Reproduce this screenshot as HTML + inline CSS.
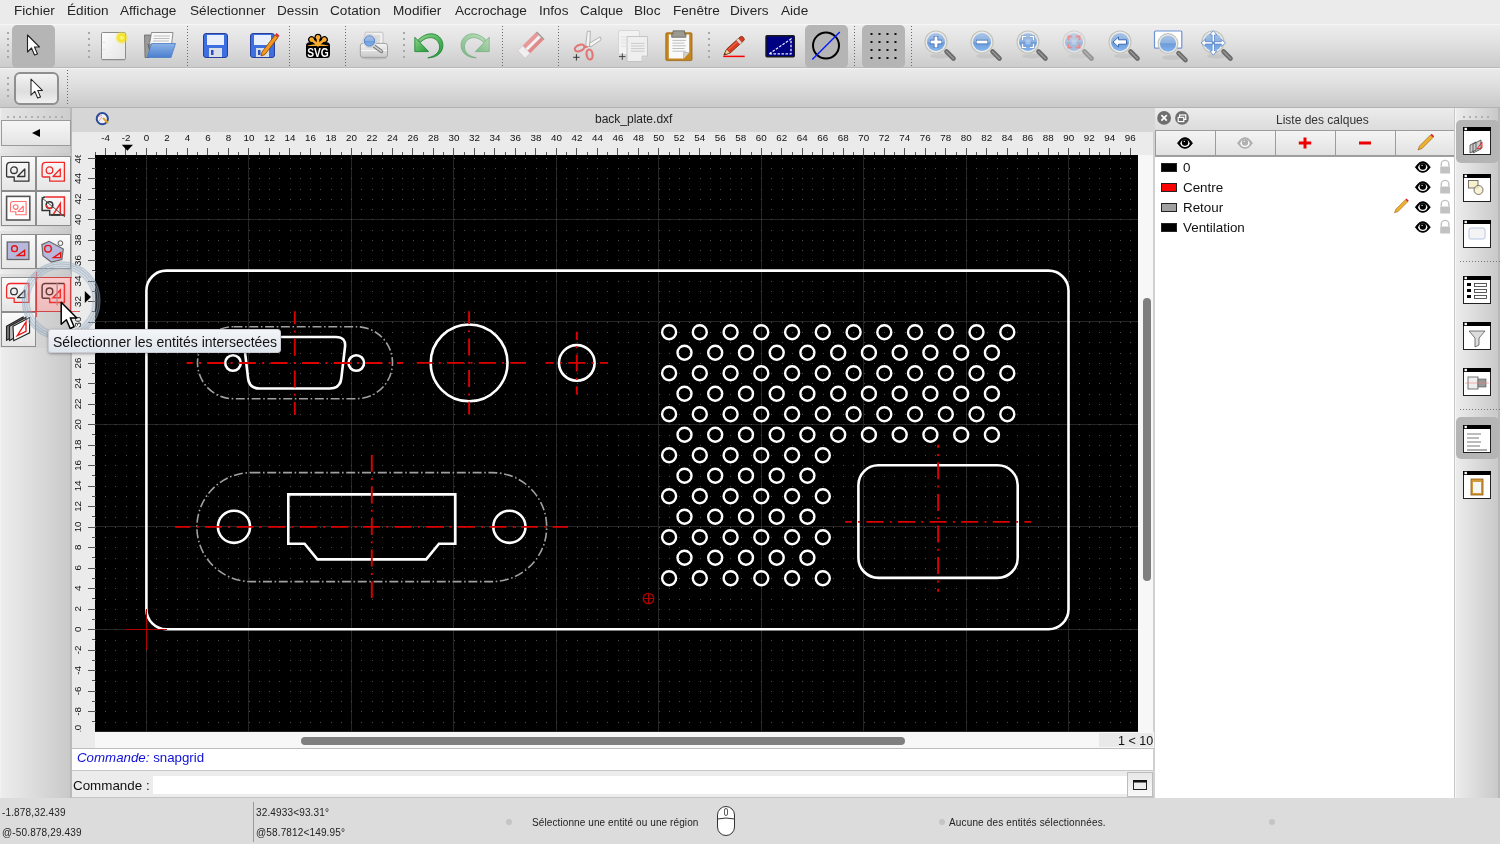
<!DOCTYPE html><html><head><meta charset="utf-8"><style>
*{margin:0;padding:0;box-sizing:border-box}
html,body{width:1500px;height:844px;overflow:hidden;background:#ececec;font-family:"Liberation Sans",sans-serif;color:#262626}
.a{position:absolute}
.t{position:absolute;white-space:nowrap;line-height:1;will-change:transform}
svg{will-change:transform}
</style></head><body><div class="a" style="left:0;top:0;width:1500px;height:24px;background:#ebebeb"></div>
<div class="t" style="left:14.0px;top:3.8px;font-size:13.6px;color:#262626">Fichier</div>
<div class="t" style="left:66.60000000000001px;top:3.8px;font-size:13.6px;color:#262626">Édition</div>
<div class="t" style="left:120.4px;top:3.8px;font-size:13.6px;color:#262626">Affichage</div>
<div class="t" style="left:189.9px;top:3.8px;font-size:13.6px;color:#262626">Sélectionner</div>
<div class="t" style="left:277.29999999999995px;top:3.8px;font-size:13.6px;color:#262626">Dessin</div>
<div class="t" style="left:329.9px;top:3.8px;font-size:13.6px;color:#262626">Cotation</div>
<div class="t" style="left:393.09999999999997px;top:3.8px;font-size:13.6px;color:#262626">Modifier</div>
<div class="t" style="left:455.09999999999997px;top:3.8px;font-size:13.6px;color:#262626">Accrochage</div>
<div class="t" style="left:538.6px;top:3.8px;font-size:13.6px;color:#262626">Infos</div>
<div class="t" style="left:579.6999999999999px;top:3.8px;font-size:13.6px;color:#262626">Calque</div>
<div class="t" style="left:633.9px;top:3.8px;font-size:13.6px;color:#262626">Bloc</div>
<div class="t" style="left:672.6999999999999px;top:3.8px;font-size:13.6px;color:#262626">Fenêtre</div>
<div class="t" style="left:730.4px;top:3.8px;font-size:13.6px;color:#262626">Divers</div>
<div class="t" style="left:780.6px;top:3.8px;font-size:13.6px;color:#262626">Aide</div>
<div class="a" style="left:0;top:24px;width:1500px;height:1px;background:#f6f6f6"></div>
<div class="a" style="left:0;top:25px;width:1500px;height:43px;background:linear-gradient(#ededed,#e3e3e3 35%,#cbcbcb)"></div>
<div class="a" style="left:0;top:67px;width:1500px;height:1px;background:#b9b9b9"></div>
<div class="a" style="left:0;top:68px;width:1500px;height:1px;background:#f3f3f3"></div>
<div class="a" style="left:0;top:69px;width:1500px;height:38px;background:linear-gradient(#eaeaea,#e1e1e1 35%,#c9c9c9)"></div>
<div class="a" style="left:0;top:107px;width:1500px;height:1px;background:#b3b3b3"></div>
<div class="a" style="left:7px;top:32px;width:2px;height:2px;background:#a8a8a8"></div><div class="a" style="left:7px;top:38px;width:2px;height:2px;background:#a8a8a8"></div><div class="a" style="left:7px;top:44px;width:2px;height:2px;background:#a8a8a8"></div><div class="a" style="left:7px;top:50px;width:2px;height:2px;background:#a8a8a8"></div><div class="a" style="left:7px;top:56px;width:2px;height:2px;background:#a8a8a8"></div>
<div class="a" style="left:12px;top:25px;width:43px;height:43px;border-radius:5px;background:#b5b5b5"></div>
<div class="a" style="left:88px;top:32px;width:2px;height:2px;background:#a8a8a8"></div><div class="a" style="left:88px;top:38px;width:2px;height:2px;background:#a8a8a8"></div><div class="a" style="left:88px;top:44px;width:2px;height:2px;background:#a8a8a8"></div><div class="a" style="left:88px;top:50px;width:2px;height:2px;background:#a8a8a8"></div><div class="a" style="left:88px;top:56px;width:2px;height:2px;background:#a8a8a8"></div>
<div class="a" style="left:187px;top:26px;width:1px;height:41px;background:repeating-linear-gradient(#6a6a6a 0 1px,transparent 1px 3px)"></div>
<div class="a" style="left:289px;top:26px;width:1px;height:41px;background:repeating-linear-gradient(#6a6a6a 0 1px,transparent 1px 3px)"></div>
<div class="a" style="left:345px;top:26px;width:1px;height:41px;background:repeating-linear-gradient(#6a6a6a 0 1px,transparent 1px 3px)"></div>
<div class="a" style="left:502px;top:26px;width:1px;height:41px;background:repeating-linear-gradient(#6a6a6a 0 1px,transparent 1px 3px)"></div>
<div class="a" style="left:558px;top:26px;width:1px;height:41px;background:repeating-linear-gradient(#6a6a6a 0 1px,transparent 1px 3px)"></div>
<div class="a" style="left:854px;top:26px;width:1px;height:41px;background:repeating-linear-gradient(#6a6a6a 0 1px,transparent 1px 3px)"></div>
<div class="a" style="left:911px;top:26px;width:1px;height:41px;background:repeating-linear-gradient(#6a6a6a 0 1px,transparent 1px 3px)"></div>
<div class="a" style="left:403px;top:32px;width:2px;height:2px;background:#a8a8a8"></div><div class="a" style="left:403px;top:38px;width:2px;height:2px;background:#a8a8a8"></div><div class="a" style="left:403px;top:44px;width:2px;height:2px;background:#a8a8a8"></div><div class="a" style="left:403px;top:50px;width:2px;height:2px;background:#a8a8a8"></div><div class="a" style="left:403px;top:56px;width:2px;height:2px;background:#a8a8a8"></div>
<div class="a" style="left:708px;top:32px;width:2px;height:2px;background:#a8a8a8"></div><div class="a" style="left:708px;top:38px;width:2px;height:2px;background:#a8a8a8"></div><div class="a" style="left:708px;top:44px;width:2px;height:2px;background:#a8a8a8"></div><div class="a" style="left:708px;top:50px;width:2px;height:2px;background:#a8a8a8"></div><div class="a" style="left:708px;top:56px;width:2px;height:2px;background:#a8a8a8"></div>
<div class="a" style="left:805px;top:25px;width:43px;height:43px;border-radius:5px;background:#b5b5b5"></div>
<div class="a" style="left:862px;top:25px;width:43px;height:43px;border-radius:5px;background:#b5b5b5"></div>
<div class="a" style="left:7px;top:77px;width:2px;height:2px;background:#a8a8a8"></div><div class="a" style="left:7px;top:83px;width:2px;height:2px;background:#a8a8a8"></div><div class="a" style="left:7px;top:89px;width:2px;height:2px;background:#a8a8a8"></div><div class="a" style="left:7px;top:95px;width:2px;height:2px;background:#a8a8a8"></div>
<div class="a" style="left:14px;top:72px;width:45px;height:33px;border-radius:6px;border:2px solid #8f8f8f;background:linear-gradient(#f4f4f4,#dedede 60%,#f0f0f0)"></div>
<div class="a" style="left:67px;top:70px;width:1px;height:36px;background:repeating-linear-gradient(#6a6a6a 0 1px,transparent 1px 3px)"></div>
<div class="a" style="left:72px;top:108px;width:1083px;height:24px;background:#d6d6d6"></div>
<div class="t" style="left:595px;top:113px;font-size:12px;color:#222">back_plate.dxf</div>
<div class="a" style="left:72px;top:132px;width:1083px;height:23px;background:#ebebeb"></div>
<div class="a" style="left:72px;top:155px;width:23px;height:577px;background:#ebebeb"></div>
<div class="a" style="left:1138px;top:155px;width:16px;height:577px;background:#f7f7f7"></div>
<div class="a" style="left:1153px;top:132px;width:2px;height:666px;background:#d0d0d0"></div>
<div class="a" style="left:72px;top:732px;width:1082px;height:16px;background:#f7f7f7"></div>
<div class="a" style="left:72px;top:732px;width:23px;height:16px;background:#ebebeb"></div>
<div class="a" style="left:1143px;top:298px;width:8px;height:283px;border-radius:4px;background:#7f7f7f"></div>
<div class="a" style="left:301px;top:737px;width:604px;height:8px;border-radius:4px;background:#7f7f7f"></div>
<div class="a" style="left:1099px;top:733px;width:54px;height:14px;background:#e9e9e9"></div>
<div class="t" style="left:1118px;top:735px;font-size:12.5px;color:#111">1 &lt; 10</div>
<svg class="a" style="left:0;top:0" width="1500" height="844" viewBox="0 0 1500 844"><defs><clipPath id="cclip"><rect x="95" y="155" width="1043" height="577"/></clipPath><clipPath id="lrclip"><rect x="72" y="155" width="23" height="576.5"/></clipPath></defs><g clip-path="url(#cclip)"><rect x="95" y="155" width="1043" height="577" fill="#000"/><path d="M146.5 155V732M248.5 155V732M351.5 155V732M453.5 155V732M556.5 155V732M658.5 155V732M761.5 155V732M863.5 155V732M966.5 155V732M1068.5 155V732M95 731.5H1138M95 629.5H1138M95 526.5H1138M95 424.5H1138M95 321.5H1138M95 219.5H1138" stroke="#262626" stroke-width="1"/><path d="M95 722h1M95 711h1M95 701h1M95 691h1M95 681h1M95 670h1M95 660h1M95 650h1M95 640h1M95 629h1M95 619h1M95 609h1M95 599h1M95 588h1M95 578h1M95 568h1M95 558h1M95 547h1M95 537h1M95 527h1M95 517h1M95 506h1M95 496h1M95 486h1M95 476h1M95 465h1M95 455h1M95 445h1M95 435h1M95 424h1M95 414h1M95 404h1M95 394h1M95 383h1M95 373h1M95 363h1M95 353h1M95 342h1M95 332h1M95 322h1M95 312h1M95 301h1M95 291h1M95 281h1M95 271h1M95 260h1M95 250h1M95 240h1M95 230h1M95 219h1M95 209h1M95 199h1M95 189h1M95 178h1M95 168h1M95 158h1M105 722h1M105 711h1M105 701h1M105 691h1M105 681h1M105 670h1M105 660h1M105 650h1M105 640h1M105 629h1M105 619h1M105 609h1M105 599h1M105 588h1M105 578h1M105 568h1M105 558h1M105 547h1M105 537h1M105 527h1M105 517h1M105 506h1M105 496h1M105 486h1M105 476h1M105 465h1M105 455h1M105 445h1M105 435h1M105 424h1M105 414h1M105 404h1M105 394h1M105 383h1M105 373h1M105 363h1M105 353h1M105 342h1M105 332h1M105 322h1M105 312h1M105 301h1M105 291h1M105 281h1M105 271h1M105 260h1M105 250h1M105 240h1M105 230h1M105 219h1M105 209h1M105 199h1M105 189h1M105 178h1M105 168h1M105 158h1M115 722h1M115 711h1M115 701h1M115 691h1M115 681h1M115 670h1M115 660h1M115 650h1M115 640h1M115 629h1M115 619h1M115 609h1M115 599h1M115 588h1M115 578h1M115 568h1M115 558h1M115 547h1M115 537h1M115 527h1M115 517h1M115 506h1M115 496h1M115 486h1M115 476h1M115 465h1M115 455h1M115 445h1M115 435h1M115 424h1M115 414h1M115 404h1M115 394h1M115 383h1M115 373h1M115 363h1M115 353h1M115 342h1M115 332h1M115 322h1M115 312h1M115 301h1M115 291h1M115 281h1M115 271h1M115 260h1M115 250h1M115 240h1M115 230h1M115 219h1M115 209h1M115 199h1M115 189h1M115 178h1M115 168h1M115 158h1M126 722h1M126 711h1M126 701h1M126 691h1M126 681h1M126 670h1M126 660h1M126 650h1M126 640h1M126 629h1M126 619h1M126 609h1M126 599h1M126 588h1M126 578h1M126 568h1M126 558h1M126 547h1M126 537h1M126 527h1M126 517h1M126 506h1M126 496h1M126 486h1M126 476h1M126 465h1M126 455h1M126 445h1M126 435h1M126 424h1M126 414h1M126 404h1M126 394h1M126 383h1M126 373h1M126 363h1M126 353h1M126 342h1M126 332h1M126 322h1M126 312h1M126 301h1M126 291h1M126 281h1M126 271h1M126 260h1M126 250h1M126 240h1M126 230h1M126 219h1M126 209h1M126 199h1M126 189h1M126 178h1M126 168h1M126 158h1M136 722h1M136 711h1M136 701h1M136 691h1M136 681h1M136 670h1M136 660h1M136 650h1M136 640h1M136 629h1M136 619h1M136 609h1M136 599h1M136 588h1M136 578h1M136 568h1M136 558h1M136 547h1M136 537h1M136 527h1M136 517h1M136 506h1M136 496h1M136 486h1M136 476h1M136 465h1M136 455h1M136 445h1M136 435h1M136 424h1M136 414h1M136 404h1M136 394h1M136 383h1M136 373h1M136 363h1M136 353h1M136 342h1M136 332h1M136 322h1M136 312h1M136 301h1M136 291h1M136 281h1M136 271h1M136 260h1M136 250h1M136 240h1M136 230h1M136 219h1M136 209h1M136 199h1M136 189h1M136 178h1M136 168h1M136 158h1M146 722h1M146 711h1M146 701h1M146 691h1M146 681h1M146 670h1M146 660h1M146 650h1M146 640h1M146 629h1M146 619h1M146 609h1M146 599h1M146 588h1M146 578h1M146 568h1M146 558h1M146 547h1M146 537h1M146 527h1M146 517h1M146 506h1M146 496h1M146 486h1M146 476h1M146 465h1M146 455h1M146 445h1M146 435h1M146 424h1M146 414h1M146 404h1M146 394h1M146 383h1M146 373h1M146 363h1M146 353h1M146 342h1M146 332h1M146 322h1M146 312h1M146 301h1M146 291h1M146 281h1M146 271h1M146 260h1M146 250h1M146 240h1M146 230h1M146 219h1M146 209h1M146 199h1M146 189h1M146 178h1M146 168h1M146 158h1M156 722h1M156 711h1M156 701h1M156 691h1M156 681h1M156 670h1M156 660h1M156 650h1M156 640h1M156 629h1M156 619h1M156 609h1M156 599h1M156 588h1M156 578h1M156 568h1M156 558h1M156 547h1M156 537h1M156 527h1M156 517h1M156 506h1M156 496h1M156 486h1M156 476h1M156 465h1M156 455h1M156 445h1M156 435h1M156 424h1M156 414h1M156 404h1M156 394h1M156 383h1M156 373h1M156 363h1M156 353h1M156 342h1M156 332h1M156 322h1M156 312h1M156 301h1M156 291h1M156 281h1M156 271h1M156 260h1M156 250h1M156 240h1M156 230h1M156 219h1M156 209h1M156 199h1M156 189h1M156 178h1M156 168h1M156 158h1M167 722h1M167 711h1M167 701h1M167 691h1M167 681h1M167 670h1M167 660h1M167 650h1M167 640h1M167 629h1M167 619h1M167 609h1M167 599h1M167 588h1M167 578h1M167 568h1M167 558h1M167 547h1M167 537h1M167 527h1M167 517h1M167 506h1M167 496h1M167 486h1M167 476h1M167 465h1M167 455h1M167 445h1M167 435h1M167 424h1M167 414h1M167 404h1M167 394h1M167 383h1M167 373h1M167 363h1M167 353h1M167 342h1M167 332h1M167 322h1M167 312h1M167 301h1M167 291h1M167 281h1M167 271h1M167 260h1M167 250h1M167 240h1M167 230h1M167 219h1M167 209h1M167 199h1M167 189h1M167 178h1M167 168h1M167 158h1M177 722h1M177 711h1M177 701h1M177 691h1M177 681h1M177 670h1M177 660h1M177 650h1M177 640h1M177 629h1M177 619h1M177 609h1M177 599h1M177 588h1M177 578h1M177 568h1M177 558h1M177 547h1M177 537h1M177 527h1M177 517h1M177 506h1M177 496h1M177 486h1M177 476h1M177 465h1M177 455h1M177 445h1M177 435h1M177 424h1M177 414h1M177 404h1M177 394h1M177 383h1M177 373h1M177 363h1M177 353h1M177 342h1M177 332h1M177 322h1M177 312h1M177 301h1M177 291h1M177 281h1M177 271h1M177 260h1M177 250h1M177 240h1M177 230h1M177 219h1M177 209h1M177 199h1M177 189h1M177 178h1M177 168h1M177 158h1M187 722h1M187 711h1M187 701h1M187 691h1M187 681h1M187 670h1M187 660h1M187 650h1M187 640h1M187 629h1M187 619h1M187 609h1M187 599h1M187 588h1M187 578h1M187 568h1M187 558h1M187 547h1M187 537h1M187 527h1M187 517h1M187 506h1M187 496h1M187 486h1M187 476h1M187 465h1M187 455h1M187 445h1M187 435h1M187 424h1M187 414h1M187 404h1M187 394h1M187 383h1M187 373h1M187 363h1M187 353h1M187 342h1M187 332h1M187 322h1M187 312h1M187 301h1M187 291h1M187 281h1M187 271h1M187 260h1M187 250h1M187 240h1M187 230h1M187 219h1M187 209h1M187 199h1M187 189h1M187 178h1M187 168h1M187 158h1M197 722h1M197 711h1M197 701h1M197 691h1M197 681h1M197 670h1M197 660h1M197 650h1M197 640h1M197 629h1M197 619h1M197 609h1M197 599h1M197 588h1M197 578h1M197 568h1M197 558h1M197 547h1M197 537h1M197 527h1M197 517h1M197 506h1M197 496h1M197 486h1M197 476h1M197 465h1M197 455h1M197 445h1M197 435h1M197 424h1M197 414h1M197 404h1M197 394h1M197 383h1M197 373h1M197 363h1M197 353h1M197 342h1M197 332h1M197 322h1M197 312h1M197 301h1M197 291h1M197 281h1M197 271h1M197 260h1M197 250h1M197 240h1M197 230h1M197 219h1M197 209h1M197 199h1M197 189h1M197 178h1M197 168h1M197 158h1M208 722h1M208 711h1M208 701h1M208 691h1M208 681h1M208 670h1M208 660h1M208 650h1M208 640h1M208 629h1M208 619h1M208 609h1M208 599h1M208 588h1M208 578h1M208 568h1M208 558h1M208 547h1M208 537h1M208 527h1M208 517h1M208 506h1M208 496h1M208 486h1M208 476h1M208 465h1M208 455h1M208 445h1M208 435h1M208 424h1M208 414h1M208 404h1M208 394h1M208 383h1M208 373h1M208 363h1M208 353h1M208 342h1M208 332h1M208 322h1M208 312h1M208 301h1M208 291h1M208 281h1M208 271h1M208 260h1M208 250h1M208 240h1M208 230h1M208 219h1M208 209h1M208 199h1M208 189h1M208 178h1M208 168h1M208 158h1M218 722h1M218 711h1M218 701h1M218 691h1M218 681h1M218 670h1M218 660h1M218 650h1M218 640h1M218 629h1M218 619h1M218 609h1M218 599h1M218 588h1M218 578h1M218 568h1M218 558h1M218 547h1M218 537h1M218 527h1M218 517h1M218 506h1M218 496h1M218 486h1M218 476h1M218 465h1M218 455h1M218 445h1M218 435h1M218 424h1M218 414h1M218 404h1M218 394h1M218 383h1M218 373h1M218 363h1M218 353h1M218 342h1M218 332h1M218 322h1M218 312h1M218 301h1M218 291h1M218 281h1M218 271h1M218 260h1M218 250h1M218 240h1M218 230h1M218 219h1M218 209h1M218 199h1M218 189h1M218 178h1M218 168h1M218 158h1M228 722h1M228 711h1M228 701h1M228 691h1M228 681h1M228 670h1M228 660h1M228 650h1M228 640h1M228 629h1M228 619h1M228 609h1M228 599h1M228 588h1M228 578h1M228 568h1M228 558h1M228 547h1M228 537h1M228 527h1M228 517h1M228 506h1M228 496h1M228 486h1M228 476h1M228 465h1M228 455h1M228 445h1M228 435h1M228 424h1M228 414h1M228 404h1M228 394h1M228 383h1M228 373h1M228 363h1M228 353h1M228 342h1M228 332h1M228 322h1M228 312h1M228 301h1M228 291h1M228 281h1M228 271h1M228 260h1M228 250h1M228 240h1M228 230h1M228 219h1M228 209h1M228 199h1M228 189h1M228 178h1M228 168h1M228 158h1M238 722h1M238 711h1M238 701h1M238 691h1M238 681h1M238 670h1M238 660h1M238 650h1M238 640h1M238 629h1M238 619h1M238 609h1M238 599h1M238 588h1M238 578h1M238 568h1M238 558h1M238 547h1M238 537h1M238 527h1M238 517h1M238 506h1M238 496h1M238 486h1M238 476h1M238 465h1M238 455h1M238 445h1M238 435h1M238 424h1M238 414h1M238 404h1M238 394h1M238 383h1M238 373h1M238 363h1M238 353h1M238 342h1M238 332h1M238 322h1M238 312h1M238 301h1M238 291h1M238 281h1M238 271h1M238 260h1M238 250h1M238 240h1M238 230h1M238 219h1M238 209h1M238 199h1M238 189h1M238 178h1M238 168h1M238 158h1M249 722h1M249 711h1M249 701h1M249 691h1M249 681h1M249 670h1M249 660h1M249 650h1M249 640h1M249 629h1M249 619h1M249 609h1M249 599h1M249 588h1M249 578h1M249 568h1M249 558h1M249 547h1M249 537h1M249 527h1M249 517h1M249 506h1M249 496h1M249 486h1M249 476h1M249 465h1M249 455h1M249 445h1M249 435h1M249 424h1M249 414h1M249 404h1M249 394h1M249 383h1M249 373h1M249 363h1M249 353h1M249 342h1M249 332h1M249 322h1M249 312h1M249 301h1M249 291h1M249 281h1M249 271h1M249 260h1M249 250h1M249 240h1M249 230h1M249 219h1M249 209h1M249 199h1M249 189h1M249 178h1M249 168h1M249 158h1M259 722h1M259 711h1M259 701h1M259 691h1M259 681h1M259 670h1M259 660h1M259 650h1M259 640h1M259 629h1M259 619h1M259 609h1M259 599h1M259 588h1M259 578h1M259 568h1M259 558h1M259 547h1M259 537h1M259 527h1M259 517h1M259 506h1M259 496h1M259 486h1M259 476h1M259 465h1M259 455h1M259 445h1M259 435h1M259 424h1M259 414h1M259 404h1M259 394h1M259 383h1M259 373h1M259 363h1M259 353h1M259 342h1M259 332h1M259 322h1M259 312h1M259 301h1M259 291h1M259 281h1M259 271h1M259 260h1M259 250h1M259 240h1M259 230h1M259 219h1M259 209h1M259 199h1M259 189h1M259 178h1M259 168h1M259 158h1M269 722h1M269 711h1M269 701h1M269 691h1M269 681h1M269 670h1M269 660h1M269 650h1M269 640h1M269 629h1M269 619h1M269 609h1M269 599h1M269 588h1M269 578h1M269 568h1M269 558h1M269 547h1M269 537h1M269 527h1M269 517h1M269 506h1M269 496h1M269 486h1M269 476h1M269 465h1M269 455h1M269 445h1M269 435h1M269 424h1M269 414h1M269 404h1M269 394h1M269 383h1M269 373h1M269 363h1M269 353h1M269 342h1M269 332h1M269 322h1M269 312h1M269 301h1M269 291h1M269 281h1M269 271h1M269 260h1M269 250h1M269 240h1M269 230h1M269 219h1M269 209h1M269 199h1M269 189h1M269 178h1M269 168h1M269 158h1M279 722h1M279 711h1M279 701h1M279 691h1M279 681h1M279 670h1M279 660h1M279 650h1M279 640h1M279 629h1M279 619h1M279 609h1M279 599h1M279 588h1M279 578h1M279 568h1M279 558h1M279 547h1M279 537h1M279 527h1M279 517h1M279 506h1M279 496h1M279 486h1M279 476h1M279 465h1M279 455h1M279 445h1M279 435h1M279 424h1M279 414h1M279 404h1M279 394h1M279 383h1M279 373h1M279 363h1M279 353h1M279 342h1M279 332h1M279 322h1M279 312h1M279 301h1M279 291h1M279 281h1M279 271h1M279 260h1M279 250h1M279 240h1M279 230h1M279 219h1M279 209h1M279 199h1M279 189h1M279 178h1M279 168h1M279 158h1M290 722h1M290 711h1M290 701h1M290 691h1M290 681h1M290 670h1M290 660h1M290 650h1M290 640h1M290 629h1M290 619h1M290 609h1M290 599h1M290 588h1M290 578h1M290 568h1M290 558h1M290 547h1M290 537h1M290 527h1M290 517h1M290 506h1M290 496h1M290 486h1M290 476h1M290 465h1M290 455h1M290 445h1M290 435h1M290 424h1M290 414h1M290 404h1M290 394h1M290 383h1M290 373h1M290 363h1M290 353h1M290 342h1M290 332h1M290 322h1M290 312h1M290 301h1M290 291h1M290 281h1M290 271h1M290 260h1M290 250h1M290 240h1M290 230h1M290 219h1M290 209h1M290 199h1M290 189h1M290 178h1M290 168h1M290 158h1M300 722h1M300 711h1M300 701h1M300 691h1M300 681h1M300 670h1M300 660h1M300 650h1M300 640h1M300 629h1M300 619h1M300 609h1M300 599h1M300 588h1M300 578h1M300 568h1M300 558h1M300 547h1M300 537h1M300 527h1M300 517h1M300 506h1M300 496h1M300 486h1M300 476h1M300 465h1M300 455h1M300 445h1M300 435h1M300 424h1M300 414h1M300 404h1M300 394h1M300 383h1M300 373h1M300 363h1M300 353h1M300 342h1M300 332h1M300 322h1M300 312h1M300 301h1M300 291h1M300 281h1M300 271h1M300 260h1M300 250h1M300 240h1M300 230h1M300 219h1M300 209h1M300 199h1M300 189h1M300 178h1M300 168h1M300 158h1M310 722h1M310 711h1M310 701h1M310 691h1M310 681h1M310 670h1M310 660h1M310 650h1M310 640h1M310 629h1M310 619h1M310 609h1M310 599h1M310 588h1M310 578h1M310 568h1M310 558h1M310 547h1M310 537h1M310 527h1M310 517h1M310 506h1M310 496h1M310 486h1M310 476h1M310 465h1M310 455h1M310 445h1M310 435h1M310 424h1M310 414h1M310 404h1M310 394h1M310 383h1M310 373h1M310 363h1M310 353h1M310 342h1M310 332h1M310 322h1M310 312h1M310 301h1M310 291h1M310 281h1M310 271h1M310 260h1M310 250h1M310 240h1M310 230h1M310 219h1M310 209h1M310 199h1M310 189h1M310 178h1M310 168h1M310 158h1M320 722h1M320 711h1M320 701h1M320 691h1M320 681h1M320 670h1M320 660h1M320 650h1M320 640h1M320 629h1M320 619h1M320 609h1M320 599h1M320 588h1M320 578h1M320 568h1M320 558h1M320 547h1M320 537h1M320 527h1M320 517h1M320 506h1M320 496h1M320 486h1M320 476h1M320 465h1M320 455h1M320 445h1M320 435h1M320 424h1M320 414h1M320 404h1M320 394h1M320 383h1M320 373h1M320 363h1M320 353h1M320 342h1M320 332h1M320 322h1M320 312h1M320 301h1M320 291h1M320 281h1M320 271h1M320 260h1M320 250h1M320 240h1M320 230h1M320 219h1M320 209h1M320 199h1M320 189h1M320 178h1M320 168h1M320 158h1M331 722h1M331 711h1M331 701h1M331 691h1M331 681h1M331 670h1M331 660h1M331 650h1M331 640h1M331 629h1M331 619h1M331 609h1M331 599h1M331 588h1M331 578h1M331 568h1M331 558h1M331 547h1M331 537h1M331 527h1M331 517h1M331 506h1M331 496h1M331 486h1M331 476h1M331 465h1M331 455h1M331 445h1M331 435h1M331 424h1M331 414h1M331 404h1M331 394h1M331 383h1M331 373h1M331 363h1M331 353h1M331 342h1M331 332h1M331 322h1M331 312h1M331 301h1M331 291h1M331 281h1M331 271h1M331 260h1M331 250h1M331 240h1M331 230h1M331 219h1M331 209h1M331 199h1M331 189h1M331 178h1M331 168h1M331 158h1M341 722h1M341 711h1M341 701h1M341 691h1M341 681h1M341 670h1M341 660h1M341 650h1M341 640h1M341 629h1M341 619h1M341 609h1M341 599h1M341 588h1M341 578h1M341 568h1M341 558h1M341 547h1M341 537h1M341 527h1M341 517h1M341 506h1M341 496h1M341 486h1M341 476h1M341 465h1M341 455h1M341 445h1M341 435h1M341 424h1M341 414h1M341 404h1M341 394h1M341 383h1M341 373h1M341 363h1M341 353h1M341 342h1M341 332h1M341 322h1M341 312h1M341 301h1M341 291h1M341 281h1M341 271h1M341 260h1M341 250h1M341 240h1M341 230h1M341 219h1M341 209h1M341 199h1M341 189h1M341 178h1M341 168h1M341 158h1M351 722h1M351 711h1M351 701h1M351 691h1M351 681h1M351 670h1M351 660h1M351 650h1M351 640h1M351 629h1M351 619h1M351 609h1M351 599h1M351 588h1M351 578h1M351 568h1M351 558h1M351 547h1M351 537h1M351 527h1M351 517h1M351 506h1M351 496h1M351 486h1M351 476h1M351 465h1M351 455h1M351 445h1M351 435h1M351 424h1M351 414h1M351 404h1M351 394h1M351 383h1M351 373h1M351 363h1M351 353h1M351 342h1M351 332h1M351 322h1M351 312h1M351 301h1M351 291h1M351 281h1M351 271h1M351 260h1M351 250h1M351 240h1M351 230h1M351 219h1M351 209h1M351 199h1M351 189h1M351 178h1M351 168h1M351 158h1M361 722h1M361 711h1M361 701h1M361 691h1M361 681h1M361 670h1M361 660h1M361 650h1M361 640h1M361 629h1M361 619h1M361 609h1M361 599h1M361 588h1M361 578h1M361 568h1M361 558h1M361 547h1M361 537h1M361 527h1M361 517h1M361 506h1M361 496h1M361 486h1M361 476h1M361 465h1M361 455h1M361 445h1M361 435h1M361 424h1M361 414h1M361 404h1M361 394h1M361 383h1M361 373h1M361 363h1M361 353h1M361 342h1M361 332h1M361 322h1M361 312h1M361 301h1M361 291h1M361 281h1M361 271h1M361 260h1M361 250h1M361 240h1M361 230h1M361 219h1M361 209h1M361 199h1M361 189h1M361 178h1M361 168h1M361 158h1M372 722h1M372 711h1M372 701h1M372 691h1M372 681h1M372 670h1M372 660h1M372 650h1M372 640h1M372 629h1M372 619h1M372 609h1M372 599h1M372 588h1M372 578h1M372 568h1M372 558h1M372 547h1M372 537h1M372 527h1M372 517h1M372 506h1M372 496h1M372 486h1M372 476h1M372 465h1M372 455h1M372 445h1M372 435h1M372 424h1M372 414h1M372 404h1M372 394h1M372 383h1M372 373h1M372 363h1M372 353h1M372 342h1M372 332h1M372 322h1M372 312h1M372 301h1M372 291h1M372 281h1M372 271h1M372 260h1M372 250h1M372 240h1M372 230h1M372 219h1M372 209h1M372 199h1M372 189h1M372 178h1M372 168h1M372 158h1M382 722h1M382 711h1M382 701h1M382 691h1M382 681h1M382 670h1M382 660h1M382 650h1M382 640h1M382 629h1M382 619h1M382 609h1M382 599h1M382 588h1M382 578h1M382 568h1M382 558h1M382 547h1M382 537h1M382 527h1M382 517h1M382 506h1M382 496h1M382 486h1M382 476h1M382 465h1M382 455h1M382 445h1M382 435h1M382 424h1M382 414h1M382 404h1M382 394h1M382 383h1M382 373h1M382 363h1M382 353h1M382 342h1M382 332h1M382 322h1M382 312h1M382 301h1M382 291h1M382 281h1M382 271h1M382 260h1M382 250h1M382 240h1M382 230h1M382 219h1M382 209h1M382 199h1M382 189h1M382 178h1M382 168h1M382 158h1M392 722h1M392 711h1M392 701h1M392 691h1M392 681h1M392 670h1M392 660h1M392 650h1M392 640h1M392 629h1M392 619h1M392 609h1M392 599h1M392 588h1M392 578h1M392 568h1M392 558h1M392 547h1M392 537h1M392 527h1M392 517h1M392 506h1M392 496h1M392 486h1M392 476h1M392 465h1M392 455h1M392 445h1M392 435h1M392 424h1M392 414h1M392 404h1M392 394h1M392 383h1M392 373h1M392 363h1M392 353h1M392 342h1M392 332h1M392 322h1M392 312h1M392 301h1M392 291h1M392 281h1M392 271h1M392 260h1M392 250h1M392 240h1M392 230h1M392 219h1M392 209h1M392 199h1M392 189h1M392 178h1M392 168h1M392 158h1M402 722h1M402 711h1M402 701h1M402 691h1M402 681h1M402 670h1M402 660h1M402 650h1M402 640h1M402 629h1M402 619h1M402 609h1M402 599h1M402 588h1M402 578h1M402 568h1M402 558h1M402 547h1M402 537h1M402 527h1M402 517h1M402 506h1M402 496h1M402 486h1M402 476h1M402 465h1M402 455h1M402 445h1M402 435h1M402 424h1M402 414h1M402 404h1M402 394h1M402 383h1M402 373h1M402 363h1M402 353h1M402 342h1M402 332h1M402 322h1M402 312h1M402 301h1M402 291h1M402 281h1M402 271h1M402 260h1M402 250h1M402 240h1M402 230h1M402 219h1M402 209h1M402 199h1M402 189h1M402 178h1M402 168h1M402 158h1M413 722h1M413 711h1M413 701h1M413 691h1M413 681h1M413 670h1M413 660h1M413 650h1M413 640h1M413 629h1M413 619h1M413 609h1M413 599h1M413 588h1M413 578h1M413 568h1M413 558h1M413 547h1M413 537h1M413 527h1M413 517h1M413 506h1M413 496h1M413 486h1M413 476h1M413 465h1M413 455h1M413 445h1M413 435h1M413 424h1M413 414h1M413 404h1M413 394h1M413 383h1M413 373h1M413 363h1M413 353h1M413 342h1M413 332h1M413 322h1M413 312h1M413 301h1M413 291h1M413 281h1M413 271h1M413 260h1M413 250h1M413 240h1M413 230h1M413 219h1M413 209h1M413 199h1M413 189h1M413 178h1M413 168h1M413 158h1M423 722h1M423 711h1M423 701h1M423 691h1M423 681h1M423 670h1M423 660h1M423 650h1M423 640h1M423 629h1M423 619h1M423 609h1M423 599h1M423 588h1M423 578h1M423 568h1M423 558h1M423 547h1M423 537h1M423 527h1M423 517h1M423 506h1M423 496h1M423 486h1M423 476h1M423 465h1M423 455h1M423 445h1M423 435h1M423 424h1M423 414h1M423 404h1M423 394h1M423 383h1M423 373h1M423 363h1M423 353h1M423 342h1M423 332h1M423 322h1M423 312h1M423 301h1M423 291h1M423 281h1M423 271h1M423 260h1M423 250h1M423 240h1M423 230h1M423 219h1M423 209h1M423 199h1M423 189h1M423 178h1M423 168h1M423 158h1M433 722h1M433 711h1M433 701h1M433 691h1M433 681h1M433 670h1M433 660h1M433 650h1M433 640h1M433 629h1M433 619h1M433 609h1M433 599h1M433 588h1M433 578h1M433 568h1M433 558h1M433 547h1M433 537h1M433 527h1M433 517h1M433 506h1M433 496h1M433 486h1M433 476h1M433 465h1M433 455h1M433 445h1M433 435h1M433 424h1M433 414h1M433 404h1M433 394h1M433 383h1M433 373h1M433 363h1M433 353h1M433 342h1M433 332h1M433 322h1M433 312h1M433 301h1M433 291h1M433 281h1M433 271h1M433 260h1M433 250h1M433 240h1M433 230h1M433 219h1M433 209h1M433 199h1M433 189h1M433 178h1M433 168h1M433 158h1M443 722h1M443 711h1M443 701h1M443 691h1M443 681h1M443 670h1M443 660h1M443 650h1M443 640h1M443 629h1M443 619h1M443 609h1M443 599h1M443 588h1M443 578h1M443 568h1M443 558h1M443 547h1M443 537h1M443 527h1M443 517h1M443 506h1M443 496h1M443 486h1M443 476h1M443 465h1M443 455h1M443 445h1M443 435h1M443 424h1M443 414h1M443 404h1M443 394h1M443 383h1M443 373h1M443 363h1M443 353h1M443 342h1M443 332h1M443 322h1M443 312h1M443 301h1M443 291h1M443 281h1M443 271h1M443 260h1M443 250h1M443 240h1M443 230h1M443 219h1M443 209h1M443 199h1M443 189h1M443 178h1M443 168h1M443 158h1M454 722h1M454 711h1M454 701h1M454 691h1M454 681h1M454 670h1M454 660h1M454 650h1M454 640h1M454 629h1M454 619h1M454 609h1M454 599h1M454 588h1M454 578h1M454 568h1M454 558h1M454 547h1M454 537h1M454 527h1M454 517h1M454 506h1M454 496h1M454 486h1M454 476h1M454 465h1M454 455h1M454 445h1M454 435h1M454 424h1M454 414h1M454 404h1M454 394h1M454 383h1M454 373h1M454 363h1M454 353h1M454 342h1M454 332h1M454 322h1M454 312h1M454 301h1M454 291h1M454 281h1M454 271h1M454 260h1M454 250h1M454 240h1M454 230h1M454 219h1M454 209h1M454 199h1M454 189h1M454 178h1M454 168h1M454 158h1M464 722h1M464 711h1M464 701h1M464 691h1M464 681h1M464 670h1M464 660h1M464 650h1M464 640h1M464 629h1M464 619h1M464 609h1M464 599h1M464 588h1M464 578h1M464 568h1M464 558h1M464 547h1M464 537h1M464 527h1M464 517h1M464 506h1M464 496h1M464 486h1M464 476h1M464 465h1M464 455h1M464 445h1M464 435h1M464 424h1M464 414h1M464 404h1M464 394h1M464 383h1M464 373h1M464 363h1M464 353h1M464 342h1M464 332h1M464 322h1M464 312h1M464 301h1M464 291h1M464 281h1M464 271h1M464 260h1M464 250h1M464 240h1M464 230h1M464 219h1M464 209h1M464 199h1M464 189h1M464 178h1M464 168h1M464 158h1M474 722h1M474 711h1M474 701h1M474 691h1M474 681h1M474 670h1M474 660h1M474 650h1M474 640h1M474 629h1M474 619h1M474 609h1M474 599h1M474 588h1M474 578h1M474 568h1M474 558h1M474 547h1M474 537h1M474 527h1M474 517h1M474 506h1M474 496h1M474 486h1M474 476h1M474 465h1M474 455h1M474 445h1M474 435h1M474 424h1M474 414h1M474 404h1M474 394h1M474 383h1M474 373h1M474 363h1M474 353h1M474 342h1M474 332h1M474 322h1M474 312h1M474 301h1M474 291h1M474 281h1M474 271h1M474 260h1M474 250h1M474 240h1M474 230h1M474 219h1M474 209h1M474 199h1M474 189h1M474 178h1M474 168h1M474 158h1M484 722h1M484 711h1M484 701h1M484 691h1M484 681h1M484 670h1M484 660h1M484 650h1M484 640h1M484 629h1M484 619h1M484 609h1M484 599h1M484 588h1M484 578h1M484 568h1M484 558h1M484 547h1M484 537h1M484 527h1M484 517h1M484 506h1M484 496h1M484 486h1M484 476h1M484 465h1M484 455h1M484 445h1M484 435h1M484 424h1M484 414h1M484 404h1M484 394h1M484 383h1M484 373h1M484 363h1M484 353h1M484 342h1M484 332h1M484 322h1M484 312h1M484 301h1M484 291h1M484 281h1M484 271h1M484 260h1M484 250h1M484 240h1M484 230h1M484 219h1M484 209h1M484 199h1M484 189h1M484 178h1M484 168h1M484 158h1M495 722h1M495 711h1M495 701h1M495 691h1M495 681h1M495 670h1M495 660h1M495 650h1M495 640h1M495 629h1M495 619h1M495 609h1M495 599h1M495 588h1M495 578h1M495 568h1M495 558h1M495 547h1M495 537h1M495 527h1M495 517h1M495 506h1M495 496h1M495 486h1M495 476h1M495 465h1M495 455h1M495 445h1M495 435h1M495 424h1M495 414h1M495 404h1M495 394h1M495 383h1M495 373h1M495 363h1M495 353h1M495 342h1M495 332h1M495 322h1M495 312h1M495 301h1M495 291h1M495 281h1M495 271h1M495 260h1M495 250h1M495 240h1M495 230h1M495 219h1M495 209h1M495 199h1M495 189h1M495 178h1M495 168h1M495 158h1M505 722h1M505 711h1M505 701h1M505 691h1M505 681h1M505 670h1M505 660h1M505 650h1M505 640h1M505 629h1M505 619h1M505 609h1M505 599h1M505 588h1M505 578h1M505 568h1M505 558h1M505 547h1M505 537h1M505 527h1M505 517h1M505 506h1M505 496h1M505 486h1M505 476h1M505 465h1M505 455h1M505 445h1M505 435h1M505 424h1M505 414h1M505 404h1M505 394h1M505 383h1M505 373h1M505 363h1M505 353h1M505 342h1M505 332h1M505 322h1M505 312h1M505 301h1M505 291h1M505 281h1M505 271h1M505 260h1M505 250h1M505 240h1M505 230h1M505 219h1M505 209h1M505 199h1M505 189h1M505 178h1M505 168h1M505 158h1M515 722h1M515 711h1M515 701h1M515 691h1M515 681h1M515 670h1M515 660h1M515 650h1M515 640h1M515 629h1M515 619h1M515 609h1M515 599h1M515 588h1M515 578h1M515 568h1M515 558h1M515 547h1M515 537h1M515 527h1M515 517h1M515 506h1M515 496h1M515 486h1M515 476h1M515 465h1M515 455h1M515 445h1M515 435h1M515 424h1M515 414h1M515 404h1M515 394h1M515 383h1M515 373h1M515 363h1M515 353h1M515 342h1M515 332h1M515 322h1M515 312h1M515 301h1M515 291h1M515 281h1M515 271h1M515 260h1M515 250h1M515 240h1M515 230h1M515 219h1M515 209h1M515 199h1M515 189h1M515 178h1M515 168h1M515 158h1M525 722h1M525 711h1M525 701h1M525 691h1M525 681h1M525 670h1M525 660h1M525 650h1M525 640h1M525 629h1M525 619h1M525 609h1M525 599h1M525 588h1M525 578h1M525 568h1M525 558h1M525 547h1M525 537h1M525 527h1M525 517h1M525 506h1M525 496h1M525 486h1M525 476h1M525 465h1M525 455h1M525 445h1M525 435h1M525 424h1M525 414h1M525 404h1M525 394h1M525 383h1M525 373h1M525 363h1M525 353h1M525 342h1M525 332h1M525 322h1M525 312h1M525 301h1M525 291h1M525 281h1M525 271h1M525 260h1M525 250h1M525 240h1M525 230h1M525 219h1M525 209h1M525 199h1M525 189h1M525 178h1M525 168h1M525 158h1M536 722h1M536 711h1M536 701h1M536 691h1M536 681h1M536 670h1M536 660h1M536 650h1M536 640h1M536 629h1M536 619h1M536 609h1M536 599h1M536 588h1M536 578h1M536 568h1M536 558h1M536 547h1M536 537h1M536 527h1M536 517h1M536 506h1M536 496h1M536 486h1M536 476h1M536 465h1M536 455h1M536 445h1M536 435h1M536 424h1M536 414h1M536 404h1M536 394h1M536 383h1M536 373h1M536 363h1M536 353h1M536 342h1M536 332h1M536 322h1M536 312h1M536 301h1M536 291h1M536 281h1M536 271h1M536 260h1M536 250h1M536 240h1M536 230h1M536 219h1M536 209h1M536 199h1M536 189h1M536 178h1M536 168h1M536 158h1M546 722h1M546 711h1M546 701h1M546 691h1M546 681h1M546 670h1M546 660h1M546 650h1M546 640h1M546 629h1M546 619h1M546 609h1M546 599h1M546 588h1M546 578h1M546 568h1M546 558h1M546 547h1M546 537h1M546 527h1M546 517h1M546 506h1M546 496h1M546 486h1M546 476h1M546 465h1M546 455h1M546 445h1M546 435h1M546 424h1M546 414h1M546 404h1M546 394h1M546 383h1M546 373h1M546 363h1M546 353h1M546 342h1M546 332h1M546 322h1M546 312h1M546 301h1M546 291h1M546 281h1M546 271h1M546 260h1M546 250h1M546 240h1M546 230h1M546 219h1M546 209h1M546 199h1M546 189h1M546 178h1M546 168h1M546 158h1M556 722h1M556 711h1M556 701h1M556 691h1M556 681h1M556 670h1M556 660h1M556 650h1M556 640h1M556 629h1M556 619h1M556 609h1M556 599h1M556 588h1M556 578h1M556 568h1M556 558h1M556 547h1M556 537h1M556 527h1M556 517h1M556 506h1M556 496h1M556 486h1M556 476h1M556 465h1M556 455h1M556 445h1M556 435h1M556 424h1M556 414h1M556 404h1M556 394h1M556 383h1M556 373h1M556 363h1M556 353h1M556 342h1M556 332h1M556 322h1M556 312h1M556 301h1M556 291h1M556 281h1M556 271h1M556 260h1M556 250h1M556 240h1M556 230h1M556 219h1M556 209h1M556 199h1M556 189h1M556 178h1M556 168h1M556 158h1M566 722h1M566 711h1M566 701h1M566 691h1M566 681h1M566 670h1M566 660h1M566 650h1M566 640h1M566 629h1M566 619h1M566 609h1M566 599h1M566 588h1M566 578h1M566 568h1M566 558h1M566 547h1M566 537h1M566 527h1M566 517h1M566 506h1M566 496h1M566 486h1M566 476h1M566 465h1M566 455h1M566 445h1M566 435h1M566 424h1M566 414h1M566 404h1M566 394h1M566 383h1M566 373h1M566 363h1M566 353h1M566 342h1M566 332h1M566 322h1M566 312h1M566 301h1M566 291h1M566 281h1M566 271h1M566 260h1M566 250h1M566 240h1M566 230h1M566 219h1M566 209h1M566 199h1M566 189h1M566 178h1M566 168h1M566 158h1M577 722h1M577 711h1M577 701h1M577 691h1M577 681h1M577 670h1M577 660h1M577 650h1M577 640h1M577 629h1M577 619h1M577 609h1M577 599h1M577 588h1M577 578h1M577 568h1M577 558h1M577 547h1M577 537h1M577 527h1M577 517h1M577 506h1M577 496h1M577 486h1M577 476h1M577 465h1M577 455h1M577 445h1M577 435h1M577 424h1M577 414h1M577 404h1M577 394h1M577 383h1M577 373h1M577 363h1M577 353h1M577 342h1M577 332h1M577 322h1M577 312h1M577 301h1M577 291h1M577 281h1M577 271h1M577 260h1M577 250h1M577 240h1M577 230h1M577 219h1M577 209h1M577 199h1M577 189h1M577 178h1M577 168h1M577 158h1M587 722h1M587 711h1M587 701h1M587 691h1M587 681h1M587 670h1M587 660h1M587 650h1M587 640h1M587 629h1M587 619h1M587 609h1M587 599h1M587 588h1M587 578h1M587 568h1M587 558h1M587 547h1M587 537h1M587 527h1M587 517h1M587 506h1M587 496h1M587 486h1M587 476h1M587 465h1M587 455h1M587 445h1M587 435h1M587 424h1M587 414h1M587 404h1M587 394h1M587 383h1M587 373h1M587 363h1M587 353h1M587 342h1M587 332h1M587 322h1M587 312h1M587 301h1M587 291h1M587 281h1M587 271h1M587 260h1M587 250h1M587 240h1M587 230h1M587 219h1M587 209h1M587 199h1M587 189h1M587 178h1M587 168h1M587 158h1M597 722h1M597 711h1M597 701h1M597 691h1M597 681h1M597 670h1M597 660h1M597 650h1M597 640h1M597 629h1M597 619h1M597 609h1M597 599h1M597 588h1M597 578h1M597 568h1M597 558h1M597 547h1M597 537h1M597 527h1M597 517h1M597 506h1M597 496h1M597 486h1M597 476h1M597 465h1M597 455h1M597 445h1M597 435h1M597 424h1M597 414h1M597 404h1M597 394h1M597 383h1M597 373h1M597 363h1M597 353h1M597 342h1M597 332h1M597 322h1M597 312h1M597 301h1M597 291h1M597 281h1M597 271h1M597 260h1M597 250h1M597 240h1M597 230h1M597 219h1M597 209h1M597 199h1M597 189h1M597 178h1M597 168h1M597 158h1M607 722h1M607 711h1M607 701h1M607 691h1M607 681h1M607 670h1M607 660h1M607 650h1M607 640h1M607 629h1M607 619h1M607 609h1M607 599h1M607 588h1M607 578h1M607 568h1M607 558h1M607 547h1M607 537h1M607 527h1M607 517h1M607 506h1M607 496h1M607 486h1M607 476h1M607 465h1M607 455h1M607 445h1M607 435h1M607 424h1M607 414h1M607 404h1M607 394h1M607 383h1M607 373h1M607 363h1M607 353h1M607 342h1M607 332h1M607 322h1M607 312h1M607 301h1M607 291h1M607 281h1M607 271h1M607 260h1M607 250h1M607 240h1M607 230h1M607 219h1M607 209h1M607 199h1M607 189h1M607 178h1M607 168h1M607 158h1M618 722h1M618 711h1M618 701h1M618 691h1M618 681h1M618 670h1M618 660h1M618 650h1M618 640h1M618 629h1M618 619h1M618 609h1M618 599h1M618 588h1M618 578h1M618 568h1M618 558h1M618 547h1M618 537h1M618 527h1M618 517h1M618 506h1M618 496h1M618 486h1M618 476h1M618 465h1M618 455h1M618 445h1M618 435h1M618 424h1M618 414h1M618 404h1M618 394h1M618 383h1M618 373h1M618 363h1M618 353h1M618 342h1M618 332h1M618 322h1M618 312h1M618 301h1M618 291h1M618 281h1M618 271h1M618 260h1M618 250h1M618 240h1M618 230h1M618 219h1M618 209h1M618 199h1M618 189h1M618 178h1M618 168h1M618 158h1M628 722h1M628 711h1M628 701h1M628 691h1M628 681h1M628 670h1M628 660h1M628 650h1M628 640h1M628 629h1M628 619h1M628 609h1M628 599h1M628 588h1M628 578h1M628 568h1M628 558h1M628 547h1M628 537h1M628 527h1M628 517h1M628 506h1M628 496h1M628 486h1M628 476h1M628 465h1M628 455h1M628 445h1M628 435h1M628 424h1M628 414h1M628 404h1M628 394h1M628 383h1M628 373h1M628 363h1M628 353h1M628 342h1M628 332h1M628 322h1M628 312h1M628 301h1M628 291h1M628 281h1M628 271h1M628 260h1M628 250h1M628 240h1M628 230h1M628 219h1M628 209h1M628 199h1M628 189h1M628 178h1M628 168h1M628 158h1M638 722h1M638 711h1M638 701h1M638 691h1M638 681h1M638 670h1M638 660h1M638 650h1M638 640h1M638 629h1M638 619h1M638 609h1M638 599h1M638 588h1M638 578h1M638 568h1M638 558h1M638 547h1M638 537h1M638 527h1M638 517h1M638 506h1M638 496h1M638 486h1M638 476h1M638 465h1M638 455h1M638 445h1M638 435h1M638 424h1M638 414h1M638 404h1M638 394h1M638 383h1M638 373h1M638 363h1M638 353h1M638 342h1M638 332h1M638 322h1M638 312h1M638 301h1M638 291h1M638 281h1M638 271h1M638 260h1M638 250h1M638 240h1M638 230h1M638 219h1M638 209h1M638 199h1M638 189h1M638 178h1M638 168h1M638 158h1M648 722h1M648 711h1M648 701h1M648 691h1M648 681h1M648 670h1M648 660h1M648 650h1M648 640h1M648 629h1M648 619h1M648 609h1M648 599h1M648 588h1M648 578h1M648 568h1M648 558h1M648 547h1M648 537h1M648 527h1M648 517h1M648 506h1M648 496h1M648 486h1M648 476h1M648 465h1M648 455h1M648 445h1M648 435h1M648 424h1M648 414h1M648 404h1M648 394h1M648 383h1M648 373h1M648 363h1M648 353h1M648 342h1M648 332h1M648 322h1M648 312h1M648 301h1M648 291h1M648 281h1M648 271h1M648 260h1M648 250h1M648 240h1M648 230h1M648 219h1M648 209h1M648 199h1M648 189h1M648 178h1M648 168h1M648 158h1M659 722h1M659 711h1M659 701h1M659 691h1M659 681h1M659 670h1M659 660h1M659 650h1M659 640h1M659 629h1M659 619h1M659 609h1M659 599h1M659 588h1M659 578h1M659 568h1M659 558h1M659 547h1M659 537h1M659 527h1M659 517h1M659 506h1M659 496h1M659 486h1M659 476h1M659 465h1M659 455h1M659 445h1M659 435h1M659 424h1M659 414h1M659 404h1M659 394h1M659 383h1M659 373h1M659 363h1M659 353h1M659 342h1M659 332h1M659 322h1M659 312h1M659 301h1M659 291h1M659 281h1M659 271h1M659 260h1M659 250h1M659 240h1M659 230h1M659 219h1M659 209h1M659 199h1M659 189h1M659 178h1M659 168h1M659 158h1M669 722h1M669 711h1M669 701h1M669 691h1M669 681h1M669 670h1M669 660h1M669 650h1M669 640h1M669 629h1M669 619h1M669 609h1M669 599h1M669 588h1M669 578h1M669 568h1M669 558h1M669 547h1M669 537h1M669 527h1M669 517h1M669 506h1M669 496h1M669 486h1M669 476h1M669 465h1M669 455h1M669 445h1M669 435h1M669 424h1M669 414h1M669 404h1M669 394h1M669 383h1M669 373h1M669 363h1M669 353h1M669 342h1M669 332h1M669 322h1M669 312h1M669 301h1M669 291h1M669 281h1M669 271h1M669 260h1M669 250h1M669 240h1M669 230h1M669 219h1M669 209h1M669 199h1M669 189h1M669 178h1M669 168h1M669 158h1M679 722h1M679 711h1M679 701h1M679 691h1M679 681h1M679 670h1M679 660h1M679 650h1M679 640h1M679 629h1M679 619h1M679 609h1M679 599h1M679 588h1M679 578h1M679 568h1M679 558h1M679 547h1M679 537h1M679 527h1M679 517h1M679 506h1M679 496h1M679 486h1M679 476h1M679 465h1M679 455h1M679 445h1M679 435h1M679 424h1M679 414h1M679 404h1M679 394h1M679 383h1M679 373h1M679 363h1M679 353h1M679 342h1M679 332h1M679 322h1M679 312h1M679 301h1M679 291h1M679 281h1M679 271h1M679 260h1M679 250h1M679 240h1M679 230h1M679 219h1M679 209h1M679 199h1M679 189h1M679 178h1M679 168h1M679 158h1M689 722h1M689 711h1M689 701h1M689 691h1M689 681h1M689 670h1M689 660h1M689 650h1M689 640h1M689 629h1M689 619h1M689 609h1M689 599h1M689 588h1M689 578h1M689 568h1M689 558h1M689 547h1M689 537h1M689 527h1M689 517h1M689 506h1M689 496h1M689 486h1M689 476h1M689 465h1M689 455h1M689 445h1M689 435h1M689 424h1M689 414h1M689 404h1M689 394h1M689 383h1M689 373h1M689 363h1M689 353h1M689 342h1M689 332h1M689 322h1M689 312h1M689 301h1M689 291h1M689 281h1M689 271h1M689 260h1M689 250h1M689 240h1M689 230h1M689 219h1M689 209h1M689 199h1M689 189h1M689 178h1M689 168h1M689 158h1M700 722h1M700 711h1M700 701h1M700 691h1M700 681h1M700 670h1M700 660h1M700 650h1M700 640h1M700 629h1M700 619h1M700 609h1M700 599h1M700 588h1M700 578h1M700 568h1M700 558h1M700 547h1M700 537h1M700 527h1M700 517h1M700 506h1M700 496h1M700 486h1M700 476h1M700 465h1M700 455h1M700 445h1M700 435h1M700 424h1M700 414h1M700 404h1M700 394h1M700 383h1M700 373h1M700 363h1M700 353h1M700 342h1M700 332h1M700 322h1M700 312h1M700 301h1M700 291h1M700 281h1M700 271h1M700 260h1M700 250h1M700 240h1M700 230h1M700 219h1M700 209h1M700 199h1M700 189h1M700 178h1M700 168h1M700 158h1M710 722h1M710 711h1M710 701h1M710 691h1M710 681h1M710 670h1M710 660h1M710 650h1M710 640h1M710 629h1M710 619h1M710 609h1M710 599h1M710 588h1M710 578h1M710 568h1M710 558h1M710 547h1M710 537h1M710 527h1M710 517h1M710 506h1M710 496h1M710 486h1M710 476h1M710 465h1M710 455h1M710 445h1M710 435h1M710 424h1M710 414h1M710 404h1M710 394h1M710 383h1M710 373h1M710 363h1M710 353h1M710 342h1M710 332h1M710 322h1M710 312h1M710 301h1M710 291h1M710 281h1M710 271h1M710 260h1M710 250h1M710 240h1M710 230h1M710 219h1M710 209h1M710 199h1M710 189h1M710 178h1M710 168h1M710 158h1M720 722h1M720 711h1M720 701h1M720 691h1M720 681h1M720 670h1M720 660h1M720 650h1M720 640h1M720 629h1M720 619h1M720 609h1M720 599h1M720 588h1M720 578h1M720 568h1M720 558h1M720 547h1M720 537h1M720 527h1M720 517h1M720 506h1M720 496h1M720 486h1M720 476h1M720 465h1M720 455h1M720 445h1M720 435h1M720 424h1M720 414h1M720 404h1M720 394h1M720 383h1M720 373h1M720 363h1M720 353h1M720 342h1M720 332h1M720 322h1M720 312h1M720 301h1M720 291h1M720 281h1M720 271h1M720 260h1M720 250h1M720 240h1M720 230h1M720 219h1M720 209h1M720 199h1M720 189h1M720 178h1M720 168h1M720 158h1M730 722h1M730 711h1M730 701h1M730 691h1M730 681h1M730 670h1M730 660h1M730 650h1M730 640h1M730 629h1M730 619h1M730 609h1M730 599h1M730 588h1M730 578h1M730 568h1M730 558h1M730 547h1M730 537h1M730 527h1M730 517h1M730 506h1M730 496h1M730 486h1M730 476h1M730 465h1M730 455h1M730 445h1M730 435h1M730 424h1M730 414h1M730 404h1M730 394h1M730 383h1M730 373h1M730 363h1M730 353h1M730 342h1M730 332h1M730 322h1M730 312h1M730 301h1M730 291h1M730 281h1M730 271h1M730 260h1M730 250h1M730 240h1M730 230h1M730 219h1M730 209h1M730 199h1M730 189h1M730 178h1M730 168h1M730 158h1M741 722h1M741 711h1M741 701h1M741 691h1M741 681h1M741 670h1M741 660h1M741 650h1M741 640h1M741 629h1M741 619h1M741 609h1M741 599h1M741 588h1M741 578h1M741 568h1M741 558h1M741 547h1M741 537h1M741 527h1M741 517h1M741 506h1M741 496h1M741 486h1M741 476h1M741 465h1M741 455h1M741 445h1M741 435h1M741 424h1M741 414h1M741 404h1M741 394h1M741 383h1M741 373h1M741 363h1M741 353h1M741 342h1M741 332h1M741 322h1M741 312h1M741 301h1M741 291h1M741 281h1M741 271h1M741 260h1M741 250h1M741 240h1M741 230h1M741 219h1M741 209h1M741 199h1M741 189h1M741 178h1M741 168h1M741 158h1M751 722h1M751 711h1M751 701h1M751 691h1M751 681h1M751 670h1M751 660h1M751 650h1M751 640h1M751 629h1M751 619h1M751 609h1M751 599h1M751 588h1M751 578h1M751 568h1M751 558h1M751 547h1M751 537h1M751 527h1M751 517h1M751 506h1M751 496h1M751 486h1M751 476h1M751 465h1M751 455h1M751 445h1M751 435h1M751 424h1M751 414h1M751 404h1M751 394h1M751 383h1M751 373h1M751 363h1M751 353h1M751 342h1M751 332h1M751 322h1M751 312h1M751 301h1M751 291h1M751 281h1M751 271h1M751 260h1M751 250h1M751 240h1M751 230h1M751 219h1M751 209h1M751 199h1M751 189h1M751 178h1M751 168h1M751 158h1M761 722h1M761 711h1M761 701h1M761 691h1M761 681h1M761 670h1M761 660h1M761 650h1M761 640h1M761 629h1M761 619h1M761 609h1M761 599h1M761 588h1M761 578h1M761 568h1M761 558h1M761 547h1M761 537h1M761 527h1M761 517h1M761 506h1M761 496h1M761 486h1M761 476h1M761 465h1M761 455h1M761 445h1M761 435h1M761 424h1M761 414h1M761 404h1M761 394h1M761 383h1M761 373h1M761 363h1M761 353h1M761 342h1M761 332h1M761 322h1M761 312h1M761 301h1M761 291h1M761 281h1M761 271h1M761 260h1M761 250h1M761 240h1M761 230h1M761 219h1M761 209h1M761 199h1M761 189h1M761 178h1M761 168h1M761 158h1M771 722h1M771 711h1M771 701h1M771 691h1M771 681h1M771 670h1M771 660h1M771 650h1M771 640h1M771 629h1M771 619h1M771 609h1M771 599h1M771 588h1M771 578h1M771 568h1M771 558h1M771 547h1M771 537h1M771 527h1M771 517h1M771 506h1M771 496h1M771 486h1M771 476h1M771 465h1M771 455h1M771 445h1M771 435h1M771 424h1M771 414h1M771 404h1M771 394h1M771 383h1M771 373h1M771 363h1M771 353h1M771 342h1M771 332h1M771 322h1M771 312h1M771 301h1M771 291h1M771 281h1M771 271h1M771 260h1M771 250h1M771 240h1M771 230h1M771 219h1M771 209h1M771 199h1M771 189h1M771 178h1M771 168h1M771 158h1M782 722h1M782 711h1M782 701h1M782 691h1M782 681h1M782 670h1M782 660h1M782 650h1M782 640h1M782 629h1M782 619h1M782 609h1M782 599h1M782 588h1M782 578h1M782 568h1M782 558h1M782 547h1M782 537h1M782 527h1M782 517h1M782 506h1M782 496h1M782 486h1M782 476h1M782 465h1M782 455h1M782 445h1M782 435h1M782 424h1M782 414h1M782 404h1M782 394h1M782 383h1M782 373h1M782 363h1M782 353h1M782 342h1M782 332h1M782 322h1M782 312h1M782 301h1M782 291h1M782 281h1M782 271h1M782 260h1M782 250h1M782 240h1M782 230h1M782 219h1M782 209h1M782 199h1M782 189h1M782 178h1M782 168h1M782 158h1M792 722h1M792 711h1M792 701h1M792 691h1M792 681h1M792 670h1M792 660h1M792 650h1M792 640h1M792 629h1M792 619h1M792 609h1M792 599h1M792 588h1M792 578h1M792 568h1M792 558h1M792 547h1M792 537h1M792 527h1M792 517h1M792 506h1M792 496h1M792 486h1M792 476h1M792 465h1M792 455h1M792 445h1M792 435h1M792 424h1M792 414h1M792 404h1M792 394h1M792 383h1M792 373h1M792 363h1M792 353h1M792 342h1M792 332h1M792 322h1M792 312h1M792 301h1M792 291h1M792 281h1M792 271h1M792 260h1M792 250h1M792 240h1M792 230h1M792 219h1M792 209h1M792 199h1M792 189h1M792 178h1M792 168h1M792 158h1M802 722h1M802 711h1M802 701h1M802 691h1M802 681h1M802 670h1M802 660h1M802 650h1M802 640h1M802 629h1M802 619h1M802 609h1M802 599h1M802 588h1M802 578h1M802 568h1M802 558h1M802 547h1M802 537h1M802 527h1M802 517h1M802 506h1M802 496h1M802 486h1M802 476h1M802 465h1M802 455h1M802 445h1M802 435h1M802 424h1M802 414h1M802 404h1M802 394h1M802 383h1M802 373h1M802 363h1M802 353h1M802 342h1M802 332h1M802 322h1M802 312h1M802 301h1M802 291h1M802 281h1M802 271h1M802 260h1M802 250h1M802 240h1M802 230h1M802 219h1M802 209h1M802 199h1M802 189h1M802 178h1M802 168h1M802 158h1M812 722h1M812 711h1M812 701h1M812 691h1M812 681h1M812 670h1M812 660h1M812 650h1M812 640h1M812 629h1M812 619h1M812 609h1M812 599h1M812 588h1M812 578h1M812 568h1M812 558h1M812 547h1M812 537h1M812 527h1M812 517h1M812 506h1M812 496h1M812 486h1M812 476h1M812 465h1M812 455h1M812 445h1M812 435h1M812 424h1M812 414h1M812 404h1M812 394h1M812 383h1M812 373h1M812 363h1M812 353h1M812 342h1M812 332h1M812 322h1M812 312h1M812 301h1M812 291h1M812 281h1M812 271h1M812 260h1M812 250h1M812 240h1M812 230h1M812 219h1M812 209h1M812 199h1M812 189h1M812 178h1M812 168h1M812 158h1M823 722h1M823 711h1M823 701h1M823 691h1M823 681h1M823 670h1M823 660h1M823 650h1M823 640h1M823 629h1M823 619h1M823 609h1M823 599h1M823 588h1M823 578h1M823 568h1M823 558h1M823 547h1M823 537h1M823 527h1M823 517h1M823 506h1M823 496h1M823 486h1M823 476h1M823 465h1M823 455h1M823 445h1M823 435h1M823 424h1M823 414h1M823 404h1M823 394h1M823 383h1M823 373h1M823 363h1M823 353h1M823 342h1M823 332h1M823 322h1M823 312h1M823 301h1M823 291h1M823 281h1M823 271h1M823 260h1M823 250h1M823 240h1M823 230h1M823 219h1M823 209h1M823 199h1M823 189h1M823 178h1M823 168h1M823 158h1M833 722h1M833 711h1M833 701h1M833 691h1M833 681h1M833 670h1M833 660h1M833 650h1M833 640h1M833 629h1M833 619h1M833 609h1M833 599h1M833 588h1M833 578h1M833 568h1M833 558h1M833 547h1M833 537h1M833 527h1M833 517h1M833 506h1M833 496h1M833 486h1M833 476h1M833 465h1M833 455h1M833 445h1M833 435h1M833 424h1M833 414h1M833 404h1M833 394h1M833 383h1M833 373h1M833 363h1M833 353h1M833 342h1M833 332h1M833 322h1M833 312h1M833 301h1M833 291h1M833 281h1M833 271h1M833 260h1M833 250h1M833 240h1M833 230h1M833 219h1M833 209h1M833 199h1M833 189h1M833 178h1M833 168h1M833 158h1M843 722h1M843 711h1M843 701h1M843 691h1M843 681h1M843 670h1M843 660h1M843 650h1M843 640h1M843 629h1M843 619h1M843 609h1M843 599h1M843 588h1M843 578h1M843 568h1M843 558h1M843 547h1M843 537h1M843 527h1M843 517h1M843 506h1M843 496h1M843 486h1M843 476h1M843 465h1M843 455h1M843 445h1M843 435h1M843 424h1M843 414h1M843 404h1M843 394h1M843 383h1M843 373h1M843 363h1M843 353h1M843 342h1M843 332h1M843 322h1M843 312h1M843 301h1M843 291h1M843 281h1M843 271h1M843 260h1M843 250h1M843 240h1M843 230h1M843 219h1M843 209h1M843 199h1M843 189h1M843 178h1M843 168h1M843 158h1M853 722h1M853 711h1M853 701h1M853 691h1M853 681h1M853 670h1M853 660h1M853 650h1M853 640h1M853 629h1M853 619h1M853 609h1M853 599h1M853 588h1M853 578h1M853 568h1M853 558h1M853 547h1M853 537h1M853 527h1M853 517h1M853 506h1M853 496h1M853 486h1M853 476h1M853 465h1M853 455h1M853 445h1M853 435h1M853 424h1M853 414h1M853 404h1M853 394h1M853 383h1M853 373h1M853 363h1M853 353h1M853 342h1M853 332h1M853 322h1M853 312h1M853 301h1M853 291h1M853 281h1M853 271h1M853 260h1M853 250h1M853 240h1M853 230h1M853 219h1M853 209h1M853 199h1M853 189h1M853 178h1M853 168h1M853 158h1M864 722h1M864 711h1M864 701h1M864 691h1M864 681h1M864 670h1M864 660h1M864 650h1M864 640h1M864 629h1M864 619h1M864 609h1M864 599h1M864 588h1M864 578h1M864 568h1M864 558h1M864 547h1M864 537h1M864 527h1M864 517h1M864 506h1M864 496h1M864 486h1M864 476h1M864 465h1M864 455h1M864 445h1M864 435h1M864 424h1M864 414h1M864 404h1M864 394h1M864 383h1M864 373h1M864 363h1M864 353h1M864 342h1M864 332h1M864 322h1M864 312h1M864 301h1M864 291h1M864 281h1M864 271h1M864 260h1M864 250h1M864 240h1M864 230h1M864 219h1M864 209h1M864 199h1M864 189h1M864 178h1M864 168h1M864 158h1M874 722h1M874 711h1M874 701h1M874 691h1M874 681h1M874 670h1M874 660h1M874 650h1M874 640h1M874 629h1M874 619h1M874 609h1M874 599h1M874 588h1M874 578h1M874 568h1M874 558h1M874 547h1M874 537h1M874 527h1M874 517h1M874 506h1M874 496h1M874 486h1M874 476h1M874 465h1M874 455h1M874 445h1M874 435h1M874 424h1M874 414h1M874 404h1M874 394h1M874 383h1M874 373h1M874 363h1M874 353h1M874 342h1M874 332h1M874 322h1M874 312h1M874 301h1M874 291h1M874 281h1M874 271h1M874 260h1M874 250h1M874 240h1M874 230h1M874 219h1M874 209h1M874 199h1M874 189h1M874 178h1M874 168h1M874 158h1M884 722h1M884 711h1M884 701h1M884 691h1M884 681h1M884 670h1M884 660h1M884 650h1M884 640h1M884 629h1M884 619h1M884 609h1M884 599h1M884 588h1M884 578h1M884 568h1M884 558h1M884 547h1M884 537h1M884 527h1M884 517h1M884 506h1M884 496h1M884 486h1M884 476h1M884 465h1M884 455h1M884 445h1M884 435h1M884 424h1M884 414h1M884 404h1M884 394h1M884 383h1M884 373h1M884 363h1M884 353h1M884 342h1M884 332h1M884 322h1M884 312h1M884 301h1M884 291h1M884 281h1M884 271h1M884 260h1M884 250h1M884 240h1M884 230h1M884 219h1M884 209h1M884 199h1M884 189h1M884 178h1M884 168h1M884 158h1M894 722h1M894 711h1M894 701h1M894 691h1M894 681h1M894 670h1M894 660h1M894 650h1M894 640h1M894 629h1M894 619h1M894 609h1M894 599h1M894 588h1M894 578h1M894 568h1M894 558h1M894 547h1M894 537h1M894 527h1M894 517h1M894 506h1M894 496h1M894 486h1M894 476h1M894 465h1M894 455h1M894 445h1M894 435h1M894 424h1M894 414h1M894 404h1M894 394h1M894 383h1M894 373h1M894 363h1M894 353h1M894 342h1M894 332h1M894 322h1M894 312h1M894 301h1M894 291h1M894 281h1M894 271h1M894 260h1M894 250h1M894 240h1M894 230h1M894 219h1M894 209h1M894 199h1M894 189h1M894 178h1M894 168h1M894 158h1M905 722h1M905 711h1M905 701h1M905 691h1M905 681h1M905 670h1M905 660h1M905 650h1M905 640h1M905 629h1M905 619h1M905 609h1M905 599h1M905 588h1M905 578h1M905 568h1M905 558h1M905 547h1M905 537h1M905 527h1M905 517h1M905 506h1M905 496h1M905 486h1M905 476h1M905 465h1M905 455h1M905 445h1M905 435h1M905 424h1M905 414h1M905 404h1M905 394h1M905 383h1M905 373h1M905 363h1M905 353h1M905 342h1M905 332h1M905 322h1M905 312h1M905 301h1M905 291h1M905 281h1M905 271h1M905 260h1M905 250h1M905 240h1M905 230h1M905 219h1M905 209h1M905 199h1M905 189h1M905 178h1M905 168h1M905 158h1M915 722h1M915 711h1M915 701h1M915 691h1M915 681h1M915 670h1M915 660h1M915 650h1M915 640h1M915 629h1M915 619h1M915 609h1M915 599h1M915 588h1M915 578h1M915 568h1M915 558h1M915 547h1M915 537h1M915 527h1M915 517h1M915 506h1M915 496h1M915 486h1M915 476h1M915 465h1M915 455h1M915 445h1M915 435h1M915 424h1M915 414h1M915 404h1M915 394h1M915 383h1M915 373h1M915 363h1M915 353h1M915 342h1M915 332h1M915 322h1M915 312h1M915 301h1M915 291h1M915 281h1M915 271h1M915 260h1M915 250h1M915 240h1M915 230h1M915 219h1M915 209h1M915 199h1M915 189h1M915 178h1M915 168h1M915 158h1M925 722h1M925 711h1M925 701h1M925 691h1M925 681h1M925 670h1M925 660h1M925 650h1M925 640h1M925 629h1M925 619h1M925 609h1M925 599h1M925 588h1M925 578h1M925 568h1M925 558h1M925 547h1M925 537h1M925 527h1M925 517h1M925 506h1M925 496h1M925 486h1M925 476h1M925 465h1M925 455h1M925 445h1M925 435h1M925 424h1M925 414h1M925 404h1M925 394h1M925 383h1M925 373h1M925 363h1M925 353h1M925 342h1M925 332h1M925 322h1M925 312h1M925 301h1M925 291h1M925 281h1M925 271h1M925 260h1M925 250h1M925 240h1M925 230h1M925 219h1M925 209h1M925 199h1M925 189h1M925 178h1M925 168h1M925 158h1M935 722h1M935 711h1M935 701h1M935 691h1M935 681h1M935 670h1M935 660h1M935 650h1M935 640h1M935 629h1M935 619h1M935 609h1M935 599h1M935 588h1M935 578h1M935 568h1M935 558h1M935 547h1M935 537h1M935 527h1M935 517h1M935 506h1M935 496h1M935 486h1M935 476h1M935 465h1M935 455h1M935 445h1M935 435h1M935 424h1M935 414h1M935 404h1M935 394h1M935 383h1M935 373h1M935 363h1M935 353h1M935 342h1M935 332h1M935 322h1M935 312h1M935 301h1M935 291h1M935 281h1M935 271h1M935 260h1M935 250h1M935 240h1M935 230h1M935 219h1M935 209h1M935 199h1M935 189h1M935 178h1M935 168h1M935 158h1M946 722h1M946 711h1M946 701h1M946 691h1M946 681h1M946 670h1M946 660h1M946 650h1M946 640h1M946 629h1M946 619h1M946 609h1M946 599h1M946 588h1M946 578h1M946 568h1M946 558h1M946 547h1M946 537h1M946 527h1M946 517h1M946 506h1M946 496h1M946 486h1M946 476h1M946 465h1M946 455h1M946 445h1M946 435h1M946 424h1M946 414h1M946 404h1M946 394h1M946 383h1M946 373h1M946 363h1M946 353h1M946 342h1M946 332h1M946 322h1M946 312h1M946 301h1M946 291h1M946 281h1M946 271h1M946 260h1M946 250h1M946 240h1M946 230h1M946 219h1M946 209h1M946 199h1M946 189h1M946 178h1M946 168h1M946 158h1M956 722h1M956 711h1M956 701h1M956 691h1M956 681h1M956 670h1M956 660h1M956 650h1M956 640h1M956 629h1M956 619h1M956 609h1M956 599h1M956 588h1M956 578h1M956 568h1M956 558h1M956 547h1M956 537h1M956 527h1M956 517h1M956 506h1M956 496h1M956 486h1M956 476h1M956 465h1M956 455h1M956 445h1M956 435h1M956 424h1M956 414h1M956 404h1M956 394h1M956 383h1M956 373h1M956 363h1M956 353h1M956 342h1M956 332h1M956 322h1M956 312h1M956 301h1M956 291h1M956 281h1M956 271h1M956 260h1M956 250h1M956 240h1M956 230h1M956 219h1M956 209h1M956 199h1M956 189h1M956 178h1M956 168h1M956 158h1M966 722h1M966 711h1M966 701h1M966 691h1M966 681h1M966 670h1M966 660h1M966 650h1M966 640h1M966 629h1M966 619h1M966 609h1M966 599h1M966 588h1M966 578h1M966 568h1M966 558h1M966 547h1M966 537h1M966 527h1M966 517h1M966 506h1M966 496h1M966 486h1M966 476h1M966 465h1M966 455h1M966 445h1M966 435h1M966 424h1M966 414h1M966 404h1M966 394h1M966 383h1M966 373h1M966 363h1M966 353h1M966 342h1M966 332h1M966 322h1M966 312h1M966 301h1M966 291h1M966 281h1M966 271h1M966 260h1M966 250h1M966 240h1M966 230h1M966 219h1M966 209h1M966 199h1M966 189h1M966 178h1M966 168h1M966 158h1M976 722h1M976 711h1M976 701h1M976 691h1M976 681h1M976 670h1M976 660h1M976 650h1M976 640h1M976 629h1M976 619h1M976 609h1M976 599h1M976 588h1M976 578h1M976 568h1M976 558h1M976 547h1M976 537h1M976 527h1M976 517h1M976 506h1M976 496h1M976 486h1M976 476h1M976 465h1M976 455h1M976 445h1M976 435h1M976 424h1M976 414h1M976 404h1M976 394h1M976 383h1M976 373h1M976 363h1M976 353h1M976 342h1M976 332h1M976 322h1M976 312h1M976 301h1M976 291h1M976 281h1M976 271h1M976 260h1M976 250h1M976 240h1M976 230h1M976 219h1M976 209h1M976 199h1M976 189h1M976 178h1M976 168h1M976 158h1M987 722h1M987 711h1M987 701h1M987 691h1M987 681h1M987 670h1M987 660h1M987 650h1M987 640h1M987 629h1M987 619h1M987 609h1M987 599h1M987 588h1M987 578h1M987 568h1M987 558h1M987 547h1M987 537h1M987 527h1M987 517h1M987 506h1M987 496h1M987 486h1M987 476h1M987 465h1M987 455h1M987 445h1M987 435h1M987 424h1M987 414h1M987 404h1M987 394h1M987 383h1M987 373h1M987 363h1M987 353h1M987 342h1M987 332h1M987 322h1M987 312h1M987 301h1M987 291h1M987 281h1M987 271h1M987 260h1M987 250h1M987 240h1M987 230h1M987 219h1M987 209h1M987 199h1M987 189h1M987 178h1M987 168h1M987 158h1M997 722h1M997 711h1M997 701h1M997 691h1M997 681h1M997 670h1M997 660h1M997 650h1M997 640h1M997 629h1M997 619h1M997 609h1M997 599h1M997 588h1M997 578h1M997 568h1M997 558h1M997 547h1M997 537h1M997 527h1M997 517h1M997 506h1M997 496h1M997 486h1M997 476h1M997 465h1M997 455h1M997 445h1M997 435h1M997 424h1M997 414h1M997 404h1M997 394h1M997 383h1M997 373h1M997 363h1M997 353h1M997 342h1M997 332h1M997 322h1M997 312h1M997 301h1M997 291h1M997 281h1M997 271h1M997 260h1M997 250h1M997 240h1M997 230h1M997 219h1M997 209h1M997 199h1M997 189h1M997 178h1M997 168h1M997 158h1M1007 722h1M1007 711h1M1007 701h1M1007 691h1M1007 681h1M1007 670h1M1007 660h1M1007 650h1M1007 640h1M1007 629h1M1007 619h1M1007 609h1M1007 599h1M1007 588h1M1007 578h1M1007 568h1M1007 558h1M1007 547h1M1007 537h1M1007 527h1M1007 517h1M1007 506h1M1007 496h1M1007 486h1M1007 476h1M1007 465h1M1007 455h1M1007 445h1M1007 435h1M1007 424h1M1007 414h1M1007 404h1M1007 394h1M1007 383h1M1007 373h1M1007 363h1M1007 353h1M1007 342h1M1007 332h1M1007 322h1M1007 312h1M1007 301h1M1007 291h1M1007 281h1M1007 271h1M1007 260h1M1007 250h1M1007 240h1M1007 230h1M1007 219h1M1007 209h1M1007 199h1M1007 189h1M1007 178h1M1007 168h1M1007 158h1M1017 722h1M1017 711h1M1017 701h1M1017 691h1M1017 681h1M1017 670h1M1017 660h1M1017 650h1M1017 640h1M1017 629h1M1017 619h1M1017 609h1M1017 599h1M1017 588h1M1017 578h1M1017 568h1M1017 558h1M1017 547h1M1017 537h1M1017 527h1M1017 517h1M1017 506h1M1017 496h1M1017 486h1M1017 476h1M1017 465h1M1017 455h1M1017 445h1M1017 435h1M1017 424h1M1017 414h1M1017 404h1M1017 394h1M1017 383h1M1017 373h1M1017 363h1M1017 353h1M1017 342h1M1017 332h1M1017 322h1M1017 312h1M1017 301h1M1017 291h1M1017 281h1M1017 271h1M1017 260h1M1017 250h1M1017 240h1M1017 230h1M1017 219h1M1017 209h1M1017 199h1M1017 189h1M1017 178h1M1017 168h1M1017 158h1M1028 722h1M1028 711h1M1028 701h1M1028 691h1M1028 681h1M1028 670h1M1028 660h1M1028 650h1M1028 640h1M1028 629h1M1028 619h1M1028 609h1M1028 599h1M1028 588h1M1028 578h1M1028 568h1M1028 558h1M1028 547h1M1028 537h1M1028 527h1M1028 517h1M1028 506h1M1028 496h1M1028 486h1M1028 476h1M1028 465h1M1028 455h1M1028 445h1M1028 435h1M1028 424h1M1028 414h1M1028 404h1M1028 394h1M1028 383h1M1028 373h1M1028 363h1M1028 353h1M1028 342h1M1028 332h1M1028 322h1M1028 312h1M1028 301h1M1028 291h1M1028 281h1M1028 271h1M1028 260h1M1028 250h1M1028 240h1M1028 230h1M1028 219h1M1028 209h1M1028 199h1M1028 189h1M1028 178h1M1028 168h1M1028 158h1M1038 722h1M1038 711h1M1038 701h1M1038 691h1M1038 681h1M1038 670h1M1038 660h1M1038 650h1M1038 640h1M1038 629h1M1038 619h1M1038 609h1M1038 599h1M1038 588h1M1038 578h1M1038 568h1M1038 558h1M1038 547h1M1038 537h1M1038 527h1M1038 517h1M1038 506h1M1038 496h1M1038 486h1M1038 476h1M1038 465h1M1038 455h1M1038 445h1M1038 435h1M1038 424h1M1038 414h1M1038 404h1M1038 394h1M1038 383h1M1038 373h1M1038 363h1M1038 353h1M1038 342h1M1038 332h1M1038 322h1M1038 312h1M1038 301h1M1038 291h1M1038 281h1M1038 271h1M1038 260h1M1038 250h1M1038 240h1M1038 230h1M1038 219h1M1038 209h1M1038 199h1M1038 189h1M1038 178h1M1038 168h1M1038 158h1M1048 722h1M1048 711h1M1048 701h1M1048 691h1M1048 681h1M1048 670h1M1048 660h1M1048 650h1M1048 640h1M1048 629h1M1048 619h1M1048 609h1M1048 599h1M1048 588h1M1048 578h1M1048 568h1M1048 558h1M1048 547h1M1048 537h1M1048 527h1M1048 517h1M1048 506h1M1048 496h1M1048 486h1M1048 476h1M1048 465h1M1048 455h1M1048 445h1M1048 435h1M1048 424h1M1048 414h1M1048 404h1M1048 394h1M1048 383h1M1048 373h1M1048 363h1M1048 353h1M1048 342h1M1048 332h1M1048 322h1M1048 312h1M1048 301h1M1048 291h1M1048 281h1M1048 271h1M1048 260h1M1048 250h1M1048 240h1M1048 230h1M1048 219h1M1048 209h1M1048 199h1M1048 189h1M1048 178h1M1048 168h1M1048 158h1M1058 722h1M1058 711h1M1058 701h1M1058 691h1M1058 681h1M1058 670h1M1058 660h1M1058 650h1M1058 640h1M1058 629h1M1058 619h1M1058 609h1M1058 599h1M1058 588h1M1058 578h1M1058 568h1M1058 558h1M1058 547h1M1058 537h1M1058 527h1M1058 517h1M1058 506h1M1058 496h1M1058 486h1M1058 476h1M1058 465h1M1058 455h1M1058 445h1M1058 435h1M1058 424h1M1058 414h1M1058 404h1M1058 394h1M1058 383h1M1058 373h1M1058 363h1M1058 353h1M1058 342h1M1058 332h1M1058 322h1M1058 312h1M1058 301h1M1058 291h1M1058 281h1M1058 271h1M1058 260h1M1058 250h1M1058 240h1M1058 230h1M1058 219h1M1058 209h1M1058 199h1M1058 189h1M1058 178h1M1058 168h1M1058 158h1M1069 722h1M1069 711h1M1069 701h1M1069 691h1M1069 681h1M1069 670h1M1069 660h1M1069 650h1M1069 640h1M1069 629h1M1069 619h1M1069 609h1M1069 599h1M1069 588h1M1069 578h1M1069 568h1M1069 558h1M1069 547h1M1069 537h1M1069 527h1M1069 517h1M1069 506h1M1069 496h1M1069 486h1M1069 476h1M1069 465h1M1069 455h1M1069 445h1M1069 435h1M1069 424h1M1069 414h1M1069 404h1M1069 394h1M1069 383h1M1069 373h1M1069 363h1M1069 353h1M1069 342h1M1069 332h1M1069 322h1M1069 312h1M1069 301h1M1069 291h1M1069 281h1M1069 271h1M1069 260h1M1069 250h1M1069 240h1M1069 230h1M1069 219h1M1069 209h1M1069 199h1M1069 189h1M1069 178h1M1069 168h1M1069 158h1M1079 722h1M1079 711h1M1079 701h1M1079 691h1M1079 681h1M1079 670h1M1079 660h1M1079 650h1M1079 640h1M1079 629h1M1079 619h1M1079 609h1M1079 599h1M1079 588h1M1079 578h1M1079 568h1M1079 558h1M1079 547h1M1079 537h1M1079 527h1M1079 517h1M1079 506h1M1079 496h1M1079 486h1M1079 476h1M1079 465h1M1079 455h1M1079 445h1M1079 435h1M1079 424h1M1079 414h1M1079 404h1M1079 394h1M1079 383h1M1079 373h1M1079 363h1M1079 353h1M1079 342h1M1079 332h1M1079 322h1M1079 312h1M1079 301h1M1079 291h1M1079 281h1M1079 271h1M1079 260h1M1079 250h1M1079 240h1M1079 230h1M1079 219h1M1079 209h1M1079 199h1M1079 189h1M1079 178h1M1079 168h1M1079 158h1M1089 722h1M1089 711h1M1089 701h1M1089 691h1M1089 681h1M1089 670h1M1089 660h1M1089 650h1M1089 640h1M1089 629h1M1089 619h1M1089 609h1M1089 599h1M1089 588h1M1089 578h1M1089 568h1M1089 558h1M1089 547h1M1089 537h1M1089 527h1M1089 517h1M1089 506h1M1089 496h1M1089 486h1M1089 476h1M1089 465h1M1089 455h1M1089 445h1M1089 435h1M1089 424h1M1089 414h1M1089 404h1M1089 394h1M1089 383h1M1089 373h1M1089 363h1M1089 353h1M1089 342h1M1089 332h1M1089 322h1M1089 312h1M1089 301h1M1089 291h1M1089 281h1M1089 271h1M1089 260h1M1089 250h1M1089 240h1M1089 230h1M1089 219h1M1089 209h1M1089 199h1M1089 189h1M1089 178h1M1089 168h1M1089 158h1M1099 722h1M1099 711h1M1099 701h1M1099 691h1M1099 681h1M1099 670h1M1099 660h1M1099 650h1M1099 640h1M1099 629h1M1099 619h1M1099 609h1M1099 599h1M1099 588h1M1099 578h1M1099 568h1M1099 558h1M1099 547h1M1099 537h1M1099 527h1M1099 517h1M1099 506h1M1099 496h1M1099 486h1M1099 476h1M1099 465h1M1099 455h1M1099 445h1M1099 435h1M1099 424h1M1099 414h1M1099 404h1M1099 394h1M1099 383h1M1099 373h1M1099 363h1M1099 353h1M1099 342h1M1099 332h1M1099 322h1M1099 312h1M1099 301h1M1099 291h1M1099 281h1M1099 271h1M1099 260h1M1099 250h1M1099 240h1M1099 230h1M1099 219h1M1099 209h1M1099 199h1M1099 189h1M1099 178h1M1099 168h1M1099 158h1M1110 722h1M1110 711h1M1110 701h1M1110 691h1M1110 681h1M1110 670h1M1110 660h1M1110 650h1M1110 640h1M1110 629h1M1110 619h1M1110 609h1M1110 599h1M1110 588h1M1110 578h1M1110 568h1M1110 558h1M1110 547h1M1110 537h1M1110 527h1M1110 517h1M1110 506h1M1110 496h1M1110 486h1M1110 476h1M1110 465h1M1110 455h1M1110 445h1M1110 435h1M1110 424h1M1110 414h1M1110 404h1M1110 394h1M1110 383h1M1110 373h1M1110 363h1M1110 353h1M1110 342h1M1110 332h1M1110 322h1M1110 312h1M1110 301h1M1110 291h1M1110 281h1M1110 271h1M1110 260h1M1110 250h1M1110 240h1M1110 230h1M1110 219h1M1110 209h1M1110 199h1M1110 189h1M1110 178h1M1110 168h1M1110 158h1M1120 722h1M1120 711h1M1120 701h1M1120 691h1M1120 681h1M1120 670h1M1120 660h1M1120 650h1M1120 640h1M1120 629h1M1120 619h1M1120 609h1M1120 599h1M1120 588h1M1120 578h1M1120 568h1M1120 558h1M1120 547h1M1120 537h1M1120 527h1M1120 517h1M1120 506h1M1120 496h1M1120 486h1M1120 476h1M1120 465h1M1120 455h1M1120 445h1M1120 435h1M1120 424h1M1120 414h1M1120 404h1M1120 394h1M1120 383h1M1120 373h1M1120 363h1M1120 353h1M1120 342h1M1120 332h1M1120 322h1M1120 312h1M1120 301h1M1120 291h1M1120 281h1M1120 271h1M1120 260h1M1120 250h1M1120 240h1M1120 230h1M1120 219h1M1120 209h1M1120 199h1M1120 189h1M1120 178h1M1120 168h1M1120 158h1M1130 722h1M1130 711h1M1130 701h1M1130 691h1M1130 681h1M1130 670h1M1130 660h1M1130 650h1M1130 640h1M1130 629h1M1130 619h1M1130 609h1M1130 599h1M1130 588h1M1130 578h1M1130 568h1M1130 558h1M1130 547h1M1130 537h1M1130 527h1M1130 517h1M1130 506h1M1130 496h1M1130 486h1M1130 476h1M1130 465h1M1130 455h1M1130 445h1M1130 435h1M1130 424h1M1130 414h1M1130 404h1M1130 394h1M1130 383h1M1130 373h1M1130 363h1M1130 353h1M1130 342h1M1130 332h1M1130 322h1M1130 312h1M1130 301h1M1130 291h1M1130 281h1M1130 271h1M1130 260h1M1130 250h1M1130 240h1M1130 230h1M1130 219h1M1130 209h1M1130 199h1M1130 189h1M1130 178h1M1130 168h1M1130 158h1" stroke="#4a4a4a" stroke-width="1" transform="translate(0,0.5)"/><rect x="146.4" y="270.6" width="922.1" height="358.69999999999993" rx="20" fill="none" stroke="#ffffff" stroke-width="2.6"/><rect x="197.5" y="326.7" width="195.0" height="72.0" rx="36.0" fill="none" stroke="#a0a0a0" stroke-width="1.6" stroke-dasharray="9 2.6 1.6 2.6"/><rect x="196.9" y="472.6" width="349.80000000000007" height="109.0" rx="54.5" fill="none" stroke="#a0a0a0" stroke-width="1.6" stroke-dasharray="9 2.6 1.6 2.6"/><path d="M253 337 H336 Q346.2 337 345 347 L341.3 378.5 Q340 388.5 330 388.5 H259.4 Q249.4 388.5 248.1 378.5 L244.4 347 Q243.2 337 253 337 Z" fill="none" stroke="#fff" stroke-width="2.6"/><circle cx="233" cy="363" r="7.8" fill="none" stroke="#fff" stroke-width="2.6"/><circle cx="356.3" cy="363" r="7.8" fill="none" stroke="#fff" stroke-width="2.6"/><circle cx="469.1" cy="362.9" r="38.4" fill="none" stroke="#fff" stroke-width="2.6"/><circle cx="576.8" cy="362.9" r="17.8" fill="none" stroke="#fff" stroke-width="2.6"/><path d="M288.3 494.4 H455.3 V543.8 H439 L426.2 559.4 H317.4 L304.6 543.8 H288.3 Z" fill="none" stroke="#fff" stroke-width="2.6" stroke-linejoin="miter"/><circle cx="234.0" cy="526.8" r="16.1" fill="none" stroke="#fff" stroke-width="2.6"/><circle cx="509.4" cy="526.8" r="16.1" fill="none" stroke="#fff" stroke-width="2.6"/><rect x="858.4" y="465.2" width="159.30000000000007" height="112.69999999999999" rx="20" fill="none" stroke="#ffffff" stroke-width="2.6"/><circle cx="669.1" cy="332.2" r="7.0" fill="none" stroke="#fff" stroke-width="2.4"/><circle cx="699.8" cy="332.2" r="7.0" fill="none" stroke="#fff" stroke-width="2.4"/><circle cx="730.6" cy="332.2" r="7.0" fill="none" stroke="#fff" stroke-width="2.4"/><circle cx="761.3" cy="332.2" r="7.0" fill="none" stroke="#fff" stroke-width="2.4"/><circle cx="792.1" cy="332.2" r="7.0" fill="none" stroke="#fff" stroke-width="2.4"/><circle cx="822.8" cy="332.2" r="7.0" fill="none" stroke="#fff" stroke-width="2.4"/><circle cx="853.6" cy="332.2" r="7.0" fill="none" stroke="#fff" stroke-width="2.4"/><circle cx="884.3" cy="332.2" r="7.0" fill="none" stroke="#fff" stroke-width="2.4"/><circle cx="915.0" cy="332.2" r="7.0" fill="none" stroke="#fff" stroke-width="2.4"/><circle cx="945.8" cy="332.2" r="7.0" fill="none" stroke="#fff" stroke-width="2.4"/><circle cx="976.5" cy="332.2" r="7.0" fill="none" stroke="#fff" stroke-width="2.4"/><circle cx="1007.3" cy="332.2" r="7.0" fill="none" stroke="#fff" stroke-width="2.4"/><circle cx="684.5" cy="352.7" r="7.0" fill="none" stroke="#fff" stroke-width="2.4"/><circle cx="715.2" cy="352.7" r="7.0" fill="none" stroke="#fff" stroke-width="2.4"/><circle cx="746.0" cy="352.7" r="7.0" fill="none" stroke="#fff" stroke-width="2.4"/><circle cx="776.7" cy="352.7" r="7.0" fill="none" stroke="#fff" stroke-width="2.4"/><circle cx="807.4" cy="352.7" r="7.0" fill="none" stroke="#fff" stroke-width="2.4"/><circle cx="838.2" cy="352.7" r="7.0" fill="none" stroke="#fff" stroke-width="2.4"/><circle cx="868.9" cy="352.7" r="7.0" fill="none" stroke="#fff" stroke-width="2.4"/><circle cx="899.7" cy="352.7" r="7.0" fill="none" stroke="#fff" stroke-width="2.4"/><circle cx="930.4" cy="352.7" r="7.0" fill="none" stroke="#fff" stroke-width="2.4"/><circle cx="961.2" cy="352.7" r="7.0" fill="none" stroke="#fff" stroke-width="2.4"/><circle cx="991.9" cy="352.7" r="7.0" fill="none" stroke="#fff" stroke-width="2.4"/><circle cx="669.1" cy="373.2" r="7.0" fill="none" stroke="#fff" stroke-width="2.4"/><circle cx="699.8" cy="373.2" r="7.0" fill="none" stroke="#fff" stroke-width="2.4"/><circle cx="730.6" cy="373.2" r="7.0" fill="none" stroke="#fff" stroke-width="2.4"/><circle cx="761.3" cy="373.2" r="7.0" fill="none" stroke="#fff" stroke-width="2.4"/><circle cx="792.1" cy="373.2" r="7.0" fill="none" stroke="#fff" stroke-width="2.4"/><circle cx="822.8" cy="373.2" r="7.0" fill="none" stroke="#fff" stroke-width="2.4"/><circle cx="853.6" cy="373.2" r="7.0" fill="none" stroke="#fff" stroke-width="2.4"/><circle cx="884.3" cy="373.2" r="7.0" fill="none" stroke="#fff" stroke-width="2.4"/><circle cx="915.0" cy="373.2" r="7.0" fill="none" stroke="#fff" stroke-width="2.4"/><circle cx="945.8" cy="373.2" r="7.0" fill="none" stroke="#fff" stroke-width="2.4"/><circle cx="976.5" cy="373.2" r="7.0" fill="none" stroke="#fff" stroke-width="2.4"/><circle cx="1007.3" cy="373.2" r="7.0" fill="none" stroke="#fff" stroke-width="2.4"/><circle cx="684.5" cy="393.7" r="7.0" fill="none" stroke="#fff" stroke-width="2.4"/><circle cx="715.2" cy="393.7" r="7.0" fill="none" stroke="#fff" stroke-width="2.4"/><circle cx="746.0" cy="393.7" r="7.0" fill="none" stroke="#fff" stroke-width="2.4"/><circle cx="776.7" cy="393.7" r="7.0" fill="none" stroke="#fff" stroke-width="2.4"/><circle cx="807.4" cy="393.7" r="7.0" fill="none" stroke="#fff" stroke-width="2.4"/><circle cx="838.2" cy="393.7" r="7.0" fill="none" stroke="#fff" stroke-width="2.4"/><circle cx="868.9" cy="393.7" r="7.0" fill="none" stroke="#fff" stroke-width="2.4"/><circle cx="899.7" cy="393.7" r="7.0" fill="none" stroke="#fff" stroke-width="2.4"/><circle cx="930.4" cy="393.7" r="7.0" fill="none" stroke="#fff" stroke-width="2.4"/><circle cx="961.2" cy="393.7" r="7.0" fill="none" stroke="#fff" stroke-width="2.4"/><circle cx="991.9" cy="393.7" r="7.0" fill="none" stroke="#fff" stroke-width="2.4"/><circle cx="669.1" cy="414.2" r="7.0" fill="none" stroke="#fff" stroke-width="2.4"/><circle cx="699.8" cy="414.2" r="7.0" fill="none" stroke="#fff" stroke-width="2.4"/><circle cx="730.6" cy="414.2" r="7.0" fill="none" stroke="#fff" stroke-width="2.4"/><circle cx="761.3" cy="414.2" r="7.0" fill="none" stroke="#fff" stroke-width="2.4"/><circle cx="792.1" cy="414.2" r="7.0" fill="none" stroke="#fff" stroke-width="2.4"/><circle cx="822.8" cy="414.2" r="7.0" fill="none" stroke="#fff" stroke-width="2.4"/><circle cx="853.6" cy="414.2" r="7.0" fill="none" stroke="#fff" stroke-width="2.4"/><circle cx="884.3" cy="414.2" r="7.0" fill="none" stroke="#fff" stroke-width="2.4"/><circle cx="915.0" cy="414.2" r="7.0" fill="none" stroke="#fff" stroke-width="2.4"/><circle cx="945.8" cy="414.2" r="7.0" fill="none" stroke="#fff" stroke-width="2.4"/><circle cx="976.5" cy="414.2" r="7.0" fill="none" stroke="#fff" stroke-width="2.4"/><circle cx="1007.3" cy="414.2" r="7.0" fill="none" stroke="#fff" stroke-width="2.4"/><circle cx="684.5" cy="434.7" r="7.0" fill="none" stroke="#fff" stroke-width="2.4"/><circle cx="715.2" cy="434.7" r="7.0" fill="none" stroke="#fff" stroke-width="2.4"/><circle cx="746.0" cy="434.7" r="7.0" fill="none" stroke="#fff" stroke-width="2.4"/><circle cx="776.7" cy="434.7" r="7.0" fill="none" stroke="#fff" stroke-width="2.4"/><circle cx="807.4" cy="434.7" r="7.0" fill="none" stroke="#fff" stroke-width="2.4"/><circle cx="838.2" cy="434.7" r="7.0" fill="none" stroke="#fff" stroke-width="2.4"/><circle cx="868.9" cy="434.7" r="7.0" fill="none" stroke="#fff" stroke-width="2.4"/><circle cx="899.7" cy="434.7" r="7.0" fill="none" stroke="#fff" stroke-width="2.4"/><circle cx="930.4" cy="434.7" r="7.0" fill="none" stroke="#fff" stroke-width="2.4"/><circle cx="961.2" cy="434.7" r="7.0" fill="none" stroke="#fff" stroke-width="2.4"/><circle cx="991.9" cy="434.7" r="7.0" fill="none" stroke="#fff" stroke-width="2.4"/><circle cx="669.1" cy="455.2" r="7.0" fill="none" stroke="#fff" stroke-width="2.4"/><circle cx="699.8" cy="455.2" r="7.0" fill="none" stroke="#fff" stroke-width="2.4"/><circle cx="730.6" cy="455.2" r="7.0" fill="none" stroke="#fff" stroke-width="2.4"/><circle cx="761.3" cy="455.2" r="7.0" fill="none" stroke="#fff" stroke-width="2.4"/><circle cx="792.1" cy="455.2" r="7.0" fill="none" stroke="#fff" stroke-width="2.4"/><circle cx="822.8" cy="455.2" r="7.0" fill="none" stroke="#fff" stroke-width="2.4"/><circle cx="684.5" cy="475.7" r="7.0" fill="none" stroke="#fff" stroke-width="2.4"/><circle cx="715.2" cy="475.7" r="7.0" fill="none" stroke="#fff" stroke-width="2.4"/><circle cx="746.0" cy="475.7" r="7.0" fill="none" stroke="#fff" stroke-width="2.4"/><circle cx="776.7" cy="475.7" r="7.0" fill="none" stroke="#fff" stroke-width="2.4"/><circle cx="807.4" cy="475.7" r="7.0" fill="none" stroke="#fff" stroke-width="2.4"/><circle cx="669.1" cy="496.2" r="7.0" fill="none" stroke="#fff" stroke-width="2.4"/><circle cx="699.8" cy="496.2" r="7.0" fill="none" stroke="#fff" stroke-width="2.4"/><circle cx="730.6" cy="496.2" r="7.0" fill="none" stroke="#fff" stroke-width="2.4"/><circle cx="761.3" cy="496.2" r="7.0" fill="none" stroke="#fff" stroke-width="2.4"/><circle cx="792.1" cy="496.2" r="7.0" fill="none" stroke="#fff" stroke-width="2.4"/><circle cx="822.8" cy="496.2" r="7.0" fill="none" stroke="#fff" stroke-width="2.4"/><circle cx="684.5" cy="516.7" r="7.0" fill="none" stroke="#fff" stroke-width="2.4"/><circle cx="715.2" cy="516.7" r="7.0" fill="none" stroke="#fff" stroke-width="2.4"/><circle cx="746.0" cy="516.7" r="7.0" fill="none" stroke="#fff" stroke-width="2.4"/><circle cx="776.7" cy="516.7" r="7.0" fill="none" stroke="#fff" stroke-width="2.4"/><circle cx="807.4" cy="516.7" r="7.0" fill="none" stroke="#fff" stroke-width="2.4"/><circle cx="669.1" cy="537.2" r="7.0" fill="none" stroke="#fff" stroke-width="2.4"/><circle cx="699.8" cy="537.2" r="7.0" fill="none" stroke="#fff" stroke-width="2.4"/><circle cx="730.6" cy="537.2" r="7.0" fill="none" stroke="#fff" stroke-width="2.4"/><circle cx="761.3" cy="537.2" r="7.0" fill="none" stroke="#fff" stroke-width="2.4"/><circle cx="792.1" cy="537.2" r="7.0" fill="none" stroke="#fff" stroke-width="2.4"/><circle cx="822.8" cy="537.2" r="7.0" fill="none" stroke="#fff" stroke-width="2.4"/><circle cx="684.5" cy="557.7" r="7.0" fill="none" stroke="#fff" stroke-width="2.4"/><circle cx="715.2" cy="557.7" r="7.0" fill="none" stroke="#fff" stroke-width="2.4"/><circle cx="746.0" cy="557.7" r="7.0" fill="none" stroke="#fff" stroke-width="2.4"/><circle cx="776.7" cy="557.7" r="7.0" fill="none" stroke="#fff" stroke-width="2.4"/><circle cx="807.4" cy="557.7" r="7.0" fill="none" stroke="#fff" stroke-width="2.4"/><circle cx="669.1" cy="578.2" r="7.0" fill="none" stroke="#fff" stroke-width="2.4"/><circle cx="699.8" cy="578.2" r="7.0" fill="none" stroke="#fff" stroke-width="2.4"/><circle cx="730.6" cy="578.2" r="7.0" fill="none" stroke="#fff" stroke-width="2.4"/><circle cx="761.3" cy="578.2" r="7.0" fill="none" stroke="#fff" stroke-width="2.4"/><circle cx="792.1" cy="578.2" r="7.0" fill="none" stroke="#fff" stroke-width="2.4"/><circle cx="822.8" cy="578.2" r="7.0" fill="none" stroke="#fff" stroke-width="2.4"/><path d="M186.6 363 L403 363" stroke="#dc0000" stroke-width="1.9" stroke-dasharray="17 6.3 2 6.3" stroke-dashoffset="10.90"/><path d="M294.8 311.2 L294.8 415" stroke="#dc0000" stroke-width="1.9" stroke-dasharray="17 6.3 2 6.3" stroke-dashoffset="4.00"/><path d="M416.8 362.9 L526 362.9" stroke="#dc0000" stroke-width="1.9" stroke-dasharray="17 6.3 2 6.3" stroke-dashoffset="1.30"/><path d="M469.1 311.2 L469.1 414.4" stroke="#dc0000" stroke-width="1.9" stroke-dasharray="17 6.3 2 6.3" stroke-dashoffset="4.30"/><path d="M545.6 362.9 L608 362.9" stroke="#dc0000" stroke-width="1.9" stroke-dasharray="17 6.3 2 6.3" stroke-dashoffset="8.90"/><path d="M576.8 331.7 L576.8 394.4" stroke="#dc0000" stroke-width="1.9" stroke-dasharray="17 6.3 2 6.3" stroke-dashoffset="8.75"/><path d="M175 526.9 L568 526.9" stroke="#dc0000" stroke-width="1.9" stroke-dasharray="17 6.3 2 6.3" stroke-dashoffset="1.60"/><path d="M371.8 455 L371.8 598" stroke="#dc0000" stroke-width="1.9" stroke-dasharray="17 6.3 2 6.3" stroke-dashoffset="0.20"/><path d="M845.2 521.9 L1031 521.9" stroke="#dc0000" stroke-width="1.9" stroke-dasharray="17 6.3 2 6.3" stroke-dashoffset="10.40"/><path d="M938.1 444.7 L938.1 591.7" stroke="#dc0000" stroke-width="1.9" stroke-dasharray="17 6.3 2 6.3" stroke-dashoffset="14.00"/><circle cx="648.5" cy="598.5" r="5.2" fill="none" stroke="#b00000" stroke-width="1.3"/><path d="M643.3 598.5 h10.4 M648.5 593.3 v10.4" stroke="#b00000" stroke-width="1.2"/><path d="M126 629.5 H167 M146.5 609 V650" stroke="#b00000" stroke-width="1"/></g><path d="M95.5 152V155M105.5 148V155M115.5 152V155M125.5 148V155M136.5 152V155M146.5 148V155M156.5 152V155M166.5 148V155M177.5 152V155M187.5 148V155M197.5 152V155M207.5 148V155M218.5 152V155M228.5 148V155M238.5 152V155M248.5 148V155M259.5 152V155M269.5 148V155M279.5 152V155M289.5 148V155M300.5 152V155M310.5 148V155M320.5 152V155M330.5 148V155M341.5 152V155M351.5 148V155M361.5 152V155M371.5 148V155M382.5 152V155M392.5 148V155M402.5 152V155M412.5 148V155M423.5 152V155M433.5 148V155M443.5 152V155M453.5 148V155M464.5 152V155M474.5 148V155M484.5 152V155M494.5 148V155M505.5 152V155M515.5 148V155M525.5 152V155M535.5 148V155M546.5 152V155M556.5 148V155M566.5 152V155M576.5 148V155M587.5 152V155M597.5 148V155M607.5 152V155M617.5 148V155M628.5 152V155M638.5 148V155M648.5 152V155M658.5 148V155M669.5 152V155M679.5 148V155M689.5 152V155M699.5 148V155M710.5 152V155M720.5 148V155M730.5 152V155M740.5 148V155M751.5 152V155M761.5 148V155M771.5 152V155M781.5 148V155M792.5 152V155M802.5 148V155M812.5 152V155M822.5 148V155M833.5 152V155M843.5 148V155M853.5 152V155M863.5 148V155M874.5 152V155M884.5 148V155M894.5 152V155M904.5 148V155M915.5 152V155M925.5 148V155M935.5 152V155M945.5 148V155M956.5 152V155M966.5 148V155M976.5 152V155M986.5 148V155M997.5 152V155M1007.5 148V155M1017.5 152V155M1027.5 148V155M1038.5 152V155M1048.5 148V155M1058.5 152V155M1068.5 148V155M1079.5 152V155M1089.5 148V155M1099.5 152V155M1109.5 148V155M1120.5 152V155M1130.5 148V155M92 721.5H95M88 711.5H95M92 701.5H95M88 691.5H95M92 680.5H95M88 670.5H95M92 660.5H95M88 650.5H95M92 639.5H95M88 629.5H95M92 619.5H95M88 609.5H95M92 598.5H95M88 588.5H95M92 578.5H95M88 568.5H95M92 557.5H95M88 547.5H95M92 537.5H95M88 527.5H95M92 516.5H95M88 506.5H95M92 496.5H95M88 486.5H95M92 475.5H95M88 465.5H95M92 455.5H95M88 445.5H95M92 434.5H95M88 424.5H95M92 414.5H95M88 404.5H95M92 393.5H95M88 383.5H95M92 373.5H95M88 363.5H95M92 352.5H95M88 342.5H95M92 332.5H95M88 322.5H95M92 311.5H95M88 301.5H95M92 291.5H95M88 281.5H95M92 270.5H95M88 260.5H95M92 250.5H95M88 240.5H95M92 229.5H95M88 219.5H95M92 209.5H95M88 199.5H95M92 188.5H95M88 178.5H95M92 168.5H95M88 158.5H95" stroke="#555" stroke-width="1"/><path d="M121.8 144.8 H133 L127.4 150.8Z" fill="#000"/><path d="M84.8 291 V303 L91 297Z" fill="#000"/><g font-family="Liberation Sans" font-size="9.8" fill="#111"><text x="105.5" y="141" text-anchor="middle">-4</text><text x="126.0" y="141" text-anchor="middle">-2</text><text x="146.4" y="141" text-anchor="middle">0</text><text x="166.9" y="141" text-anchor="middle">2</text><text x="187.4" y="141" text-anchor="middle">4</text><text x="207.9" y="141" text-anchor="middle">6</text><text x="228.4" y="141" text-anchor="middle">8</text><text x="248.9" y="141" text-anchor="middle">10</text><text x="269.4" y="141" text-anchor="middle">12</text><text x="289.9" y="141" text-anchor="middle">14</text><text x="310.4" y="141" text-anchor="middle">16</text><text x="330.9" y="141" text-anchor="middle">18</text><text x="351.4" y="141" text-anchor="middle">20</text><text x="371.9" y="141" text-anchor="middle">22</text><text x="392.4" y="141" text-anchor="middle">24</text><text x="412.9" y="141" text-anchor="middle">26</text><text x="433.4" y="141" text-anchor="middle">28</text><text x="453.9" y="141" text-anchor="middle">30</text><text x="474.4" y="141" text-anchor="middle">32</text><text x="494.9" y="141" text-anchor="middle">34</text><text x="515.4" y="141" text-anchor="middle">36</text><text x="535.9" y="141" text-anchor="middle">38</text><text x="556.4" y="141" text-anchor="middle">40</text><text x="576.9" y="141" text-anchor="middle">42</text><text x="597.4" y="141" text-anchor="middle">44</text><text x="617.9" y="141" text-anchor="middle">46</text><text x="638.4" y="141" text-anchor="middle">48</text><text x="658.8" y="141" text-anchor="middle">50</text><text x="679.3" y="141" text-anchor="middle">52</text><text x="699.8" y="141" text-anchor="middle">54</text><text x="720.3" y="141" text-anchor="middle">56</text><text x="740.8" y="141" text-anchor="middle">58</text><text x="761.3" y="141" text-anchor="middle">60</text><text x="781.8" y="141" text-anchor="middle">62</text><text x="802.3" y="141" text-anchor="middle">64</text><text x="822.8" y="141" text-anchor="middle">66</text><text x="843.3" y="141" text-anchor="middle">68</text><text x="863.8" y="141" text-anchor="middle">70</text><text x="884.3" y="141" text-anchor="middle">72</text><text x="904.8" y="141" text-anchor="middle">74</text><text x="925.3" y="141" text-anchor="middle">76</text><text x="945.8" y="141" text-anchor="middle">78</text><text x="966.3" y="141" text-anchor="middle">80</text><text x="986.8" y="141" text-anchor="middle">82</text><text x="1007.3" y="141" text-anchor="middle">84</text><text x="1027.8" y="141" text-anchor="middle">86</text><text x="1048.3" y="141" text-anchor="middle">88</text><text x="1068.8" y="141" text-anchor="middle">90</text><text x="1089.3" y="141" text-anchor="middle">92</text><text x="1109.8" y="141" text-anchor="middle">94</text><text x="1130.3" y="141" text-anchor="middle">96</text><g clip-path="url(#lrclip)"><text transform="translate(81.1,731.9) rotate(-90)" text-anchor="middle">-10</text><text transform="translate(81.1,711.4) rotate(-90)" text-anchor="middle">-8</text><text transform="translate(81.1,690.9) rotate(-90)" text-anchor="middle">-6</text><text transform="translate(81.1,670.4) rotate(-90)" text-anchor="middle">-4</text><text transform="translate(81.1,649.9) rotate(-90)" text-anchor="middle">-2</text><text transform="translate(81.1,629.4) rotate(-90)" text-anchor="middle">0</text><text transform="translate(81.1,608.9) rotate(-90)" text-anchor="middle">2</text><text transform="translate(81.1,588.4) rotate(-90)" text-anchor="middle">4</text><text transform="translate(81.1,567.9) rotate(-90)" text-anchor="middle">6</text><text transform="translate(81.1,547.4) rotate(-90)" text-anchor="middle">8</text><text transform="translate(81.1,526.9) rotate(-90)" text-anchor="middle">10</text><text transform="translate(81.1,506.4) rotate(-90)" text-anchor="middle">12</text><text transform="translate(81.1,485.9) rotate(-90)" text-anchor="middle">14</text><text transform="translate(81.1,465.4) rotate(-90)" text-anchor="middle">16</text><text transform="translate(81.1,444.9) rotate(-90)" text-anchor="middle">18</text><text transform="translate(81.1,424.4) rotate(-90)" text-anchor="middle">20</text><text transform="translate(81.1,403.9) rotate(-90)" text-anchor="middle">22</text><text transform="translate(81.1,383.4) rotate(-90)" text-anchor="middle">24</text><text transform="translate(81.1,363.0) rotate(-90)" text-anchor="middle">26</text><text transform="translate(81.1,342.5) rotate(-90)" text-anchor="middle">28</text><text transform="translate(81.1,322.0) rotate(-90)" text-anchor="middle">30</text><text transform="translate(81.1,301.5) rotate(-90)" text-anchor="middle">32</text><text transform="translate(81.1,281.0) rotate(-90)" text-anchor="middle">34</text><text transform="translate(81.1,260.5) rotate(-90)" text-anchor="middle">36</text><text transform="translate(81.1,240.0) rotate(-90)" text-anchor="middle">38</text><text transform="translate(81.1,219.5) rotate(-90)" text-anchor="middle">40</text><text transform="translate(81.1,199.0) rotate(-90)" text-anchor="middle">42</text><text transform="translate(81.1,178.5) rotate(-90)" text-anchor="middle">44</text><text transform="translate(81.1,158.0) rotate(-90)" text-anchor="middle">46</text></g></g></svg>
<div class="a" style="left:72px;top:748px;width:1082px;height:1px;background:#bdbdbd"></div>
<div class="a" style="left:72px;top:749px;width:1081px;height:21px;background:#fff"></div>
<div class="t" style="left:77px;top:751px;font-size:13.3px;color:#1010d8"><i>Commande:</i> snapgrid</div>
<div class="a" style="left:72px;top:770px;width:1081px;height:1px;background:#c6c6c6"></div>
<div class="a" style="left:72px;top:771px;width:1081px;height:26px;background:#ececec"></div>
<div class="t" style="left:72.6px;top:778.6px;font-size:13.4px;color:#111">Commande :</div>
<div class="a" style="left:153px;top:776px;width:974px;height:18px;background:#fff"></div>
<div class="a" style="left:1127px;top:772px;width:26px;height:25px;background:linear-gradient(#e8e8e8,#f8f8f8);border:1px solid #bcbcbc"></div>
<div class="a" style="left:72px;top:797px;width:1082px;height:1px;background:#c4c4c4"></div>
<div class="a" style="left:0;top:108px;width:72px;height:690px;background:linear-gradient(90deg,#f6f6f6 0,#ededed 1px,#c9c9c9 70px,#b8b8b8 70px,#bcbcbc 72px)"></div>
<div class="a" style="left:0;top:108px;width:72px;height:45px;background:linear-gradient(90deg,#f4f4f4 0,#e6e6e6 1px,#cdcdcd 70px,#b8b8b8 70px)"></div>
<div class="a" style="left:7px;top:116px;width:2px;height:2px;background:#b0b0b0"></div>
<div class="a" style="left:13px;top:116px;width:2px;height:2px;background:#b0b0b0"></div>
<div class="a" style="left:19px;top:116px;width:2px;height:2px;background:#b0b0b0"></div>
<div class="a" style="left:25px;top:116px;width:2px;height:2px;background:#b0b0b0"></div>
<div class="a" style="left:31px;top:116px;width:2px;height:2px;background:#b0b0b0"></div>
<div class="a" style="left:37px;top:116px;width:2px;height:2px;background:#b0b0b0"></div>
<div class="a" style="left:43px;top:116px;width:2px;height:2px;background:#b0b0b0"></div>
<div class="a" style="left:49px;top:116px;width:2px;height:2px;background:#b0b0b0"></div>
<div class="a" style="left:55px;top:116px;width:2px;height:2px;background:#b0b0b0"></div>
<div class="a" style="left:61px;top:116px;width:2px;height:2px;background:#b0b0b0"></div>
<div class="a" style="left:1px;top:120px;width:70px;height:26px;border:1px solid #9a9a9a;background:linear-gradient(#f6f6f6,#e4e4e4)"></div>
<div class="a" style="left:32px;top:129px;width:0;height:0;border-top:4.5px solid transparent;border-bottom:4.5px solid transparent;border-right:8px solid #000"></div>
<div class="a" style="left:0;top:153px;width:72px;height:74px;background:linear-gradient(90deg,#e4e4e4,#c8c8c8 97%,#b8b8b8)"></div>
<div class="a" style="left:0;top:231px;width:72px;height:39px;background:linear-gradient(90deg,#e4e4e4,#c8c8c8 97%,#b8b8b8)"></div>
<div class="a" style="left:0;top:274px;width:72px;height:74px;background:linear-gradient(90deg,#e4e4e4,#c8c8c8 97%,#b8b8b8)"></div>
<div class="a" style="left:1px;top:156px;width:35px;height:35px;border:1px solid #8c8c8c;background:linear-gradient(#fafafa,#e6e6e6)"></div>
<div class="a" style="left:36px;top:156px;width:35px;height:35px;border:1px solid #8c8c8c;background:linear-gradient(#fafafa,#e6e6e6)"></div>
<div class="a" style="left:1px;top:191px;width:35px;height:35px;border:1px solid #8c8c8c;background:linear-gradient(#fafafa,#e6e6e6)"></div>
<div class="a" style="left:36px;top:191px;width:35px;height:35px;border:1px solid #8c8c8c;background:linear-gradient(#fafafa,#e6e6e6)"></div>
<div class="a" style="left:1px;top:234px;width:35px;height:35px;border:1px solid #8c8c8c;background:linear-gradient(#fafafa,#e6e6e6)"></div>
<div class="a" style="left:36px;top:234px;width:35px;height:35px;border:1px solid #8c8c8c;background:linear-gradient(#fafafa,#e6e6e6)"></div>
<div class="a" style="left:1px;top:277px;width:35px;height:35px;border:1px solid #8c8c8c;background:linear-gradient(#fafafa,#e6e6e6)"></div>
<div class="a" style="left:36px;top:277px;width:35px;height:35px;border:1px solid #8c8c8c;background:linear-gradient(#fafafa,#e6e6e6)"></div>
<div class="a" style="left:1px;top:311.5px;width:35px;height:35px;border:1px solid #8c8c8c;background:linear-gradient(#fafafa,#e6e6e6)"></div>
<div class="a" style="left:1155px;top:108px;width:300px;height:690px;background:#fff"></div>
<div class="a" style="left:1155px;top:108px;width:300px;height:22px;background:linear-gradient(#ececec,#dcdcdc)"></div>
<div class="t" style="left:1275.8px;top:114px;font-size:12px;color:#333">Liste des calques</div>
<div class="a" style="left:1155px;top:130px;width:300px;height:26px;background:#9c9c9c"></div>
<div class="a" style="left:1156.0px;top:131px;width:59px;height:24px;background:linear-gradient(#f4f4f4,#e2e2e2)"></div>
<div class="a" style="left:1216.0px;top:131px;width:59px;height:24px;background:linear-gradient(#f4f4f4,#e2e2e2)"></div>
<div class="a" style="left:1276.0px;top:131px;width:59px;height:24px;background:linear-gradient(#f4f4f4,#e2e2e2)"></div>
<div class="a" style="left:1336.0px;top:131px;width:59px;height:24px;background:linear-gradient(#f4f4f4,#e2e2e2)"></div>
<div class="a" style="left:1396.0px;top:131px;width:59px;height:24px;background:linear-gradient(#f4f4f4,#e2e2e2)"></div>
<div class="a" style="left:1155px;top:156px;width:300px;height:1px;background:#a0a0a0"></div>
<div class="a" style="left:1161px;top:163px;width:16px;height:9px;background:#000;border:1px solid #222"></div>
<div class="t" style="left:1183px;top:161.1px;font-size:13.4px;color:#111">0</div>
<div class="a" style="left:1161px;top:183px;width:16px;height:9px;background:#f00;border:1px solid #222"></div>
<div class="t" style="left:1183px;top:181.1px;font-size:13.4px;color:#111">Centre</div>
<div class="a" style="left:1161px;top:203px;width:16px;height:9px;background:#a0a0a0;border:1px solid #222"></div>
<div class="t" style="left:1183px;top:201.1px;font-size:13.4px;color:#111">Retour</div>
<div class="a" style="left:1161px;top:223px;width:16px;height:9px;background:#000;border:1px solid #222"></div>
<div class="t" style="left:1183px;top:221.1px;font-size:13.4px;color:#111">Ventilation</div>
<div class="a" style="left:1454px;top:108px;width:1px;height:690px;background:#cfcfcf"></div>
<div class="a" style="left:1454px;top:108px;width:46px;height:690px;background:linear-gradient(90deg,#c8c8c8 0 1px,#f6f6f6 1px 2px,#ececec 2px,#c9c9c9 44px,#b8b8b8 44px)"></div>
<div class="a" style="left:1463px;top:116px;width:2px;height:2px;background:#b0b0b0"></div>
<div class="a" style="left:1469px;top:116px;width:2px;height:2px;background:#b0b0b0"></div>
<div class="a" style="left:1475px;top:116px;width:2px;height:2px;background:#b0b0b0"></div>
<div class="a" style="left:1481px;top:116px;width:2px;height:2px;background:#b0b0b0"></div>
<div class="a" style="left:1487px;top:116px;width:2px;height:2px;background:#b0b0b0"></div>
<div class="a" style="left:1456px;top:120px;width:43px;height:43px;border-radius:5px;background:#b5b5b5"></div>
<div class="a" style="left:1456px;top:417px;width:43px;height:42px;border-radius:5px;background:#b5b5b5"></div>
<div class="a" style="left:1460px;top:261px;width:40px;height:1px;background:repeating-linear-gradient(90deg,#777 0 1px,transparent 1px 3px)"></div>
<div class="a" style="left:1460px;top:409px;width:40px;height:1px;background:repeating-linear-gradient(90deg,#777 0 1px,transparent 1px 3px)"></div>
<div class="a" style="left:0;top:798px;width:1500px;height:46px;background:#dcdcdc"></div>
<div class="t" style="left:2px;top:807.5px;font-size:10px;letter-spacing:0.15px;color:#222">-1.878,32.439</div>
<div class="t" style="left:2px;top:827.5px;font-size:10px;letter-spacing:0.15px;color:#222">@-50.878,29.439</div>
<div class="a" style="left:253px;top:802px;width:1px;height:40px;background:#9a9a9a"></div>
<div class="t" style="left:256px;top:807.5px;font-size:10px;letter-spacing:0.15px;color:#222">32.4933&lt;93.31°</div>
<div class="t" style="left:256px;top:827.5px;font-size:10px;letter-spacing:0.15px;color:#222">@58.7812&lt;149.95°</div>
<div class="a" style="left:506px;top:819px;width:6px;height:6px;border-radius:3px;background:#c4c4c4"></div>
<div class="t" style="left:532px;top:817.5px;font-size:10px;color:#222;letter-spacing:0.1px">Sélectionne une entité ou une région</div>
<div class="a" style="left:939px;top:819px;width:6px;height:6px;border-radius:3px;background:#c4c4c4"></div>
<div class="t" style="left:949px;top:817.5px;font-size:10px;color:#222;letter-spacing:0.15px">Aucune des entités sélectionnées.</div>
<div class="a" style="left:1269px;top:819px;width:6px;height:6px;border-radius:3px;background:#c4c4c4"></div>
<svg class="a" style="left:0;top:0" width="1500" height="844" viewBox="0 0 1500 844"><path transform="translate(27.5,35) scale(1.0)" d="M0 0 L0 17 L4 13 L7 20 L10 19 L7 12 L12 12 Z" fill="#fff" stroke="#222" stroke-width="1.1" stroke-linejoin="round"/><path transform="translate(31,79) scale(0.95)" d="M0 0 L0 17 L4 13 L7 20 L10 19 L7 12 L12 12 Z" fill="#fff" stroke="#222" stroke-width="1.1" stroke-linejoin="round"/><defs><linearGradient id="gpaper" x1="0" y1="0" x2="1" y2="1"><stop offset="0" stop-color="#fdfdfd"/><stop offset="1" stop-color="#e4e4e4"/></linearGradient><radialGradient id="gglow"><stop offset="0" stop-color="#fff9a0"/><stop offset="0.5" stop-color="#f2e21a"/><stop offset="1" stop-color="#f2e21a" stop-opacity="0"/></radialGradient><linearGradient id="gblue" x1="0" y1="0" x2="0" y2="1"><stop offset="0" stop-color="#8fb4e8"/><stop offset="1" stop-color="#4a7fcf"/></linearGradient><linearGradient id="gmag" x1="0" y1="0" x2="0" y2="1"><stop offset="0" stop-color="#a9c3e6"/><stop offset="0.48" stop-color="#8cb0e0"/><stop offset="0.5" stop-color="#6c9bd8"/><stop offset="1" stop-color="#82b4ee"/></linearGradient></defs><rect x="101.5" y="33" width="24" height="27.5" rx="1.2" fill="#8a8a8a" opacity="0.5"/><rect x="101.5" y="32.5" width="24" height="27" rx="1.2" fill="url(#gpaper)" stroke="#8c8c8c" stroke-width="1"/><path d="M103.5 42.5 h1 M103.5 49.5 h1" stroke="#bbb" stroke-width="0.8"/><circle cx="121.7" cy="37.7" r="6.8" fill="url(#gglow)"/><path d="M144.5 35 h6 l-1 22.5 h-4.5z" fill="#9a9a9a" stroke="#666" stroke-width="0.8"/><path d="M151.5 32.5 h21.5 l-1.5 12 h-22z" fill="#f8f8f8" stroke="#777" stroke-width="0.8"/><path d="M154 36 h16 M153.5 38.5 h16 M153 41 h16" stroke="#bdbdbd" stroke-width="1.2"/><path d="M148.5 57.2 Q151 50 148 43.8" fill="none" stroke="#555" stroke-width="0.9"/><path d="M151.5 43.5 H175.5 L171 57.5 H147.2 Z" fill="url(#gblue)" stroke="#4a7cc4" stroke-width="0.8"/><rect x="203.5" y="33.5" width="24" height="24" rx="2.5" fill="#3d6fe0" stroke="#2a3f9a" stroke-width="1"/><rect x="207" y="35" width="17" height="10" fill="#e9eefb"/><rect x="209" y="48" width="13" height="9" fill="#d9dde6"/><rect x="211" y="50" width="2.5" height="5" fill="#2a4fc0"/><rect x="250.5" y="33.5" width="24" height="24" rx="2.5" fill="#3d6fe0" stroke="#2a3f9a" stroke-width="1"/><rect x="254" y="35" width="17" height="10" fill="#e9eefb"/><rect x="256" y="48" width="13" height="9" fill="#d9dde6"/><rect x="258" y="50" width="2.5" height="5" fill="#2a4fc0"/><path d="M262 52 l13-17 l3 2.5 l-13 17 l-4 1.5z" fill="#f39a1e" stroke="#8a3d00" stroke-width="0.8"/><path d="M275 35 l3 2.5 l1.5-2 l-3-2.5z" fill="#e0303a"/><rect x="306" y="42.3" width="24" height="15.8" rx="3.5" fill="#000"/><path d="M318 45.5 L311.6 39.6" stroke="#000" stroke-width="7" stroke-linecap="round"/><path d="M318 45.5 L318 37.2" stroke="#000" stroke-width="7" stroke-linecap="round"/><path d="M318 45.5 L324.4 39.6" stroke="#000" stroke-width="7" stroke-linecap="round"/><path d="M308 44.5 H328 V46 H308Z" fill="#000"/><path d="M318 45 L311.6 39.6" stroke="#f9ad2f" stroke-width="2.6" stroke-linecap="round"/><circle cx="311.6" cy="39.6" r="2.3" fill="#f9ad2f"/><path d="M318 45 L318 37.2" stroke="#f9ad2f" stroke-width="2.6" stroke-linecap="round"/><circle cx="318" cy="37.2" r="2.3" fill="#f9ad2f"/><path d="M318 45 L324.4 39.6" stroke="#f9ad2f" stroke-width="2.6" stroke-linecap="round"/><circle cx="324.4" cy="39.6" r="2.3" fill="#f9ad2f"/><path d="M307.8 45.4 Q318 43.2 328.3 45.4 L328.3 45.9 H307.8Z" fill="#f9ad2f"/><text x="0" y="0" transform="translate(318,57) scale(0.8,1)" font-family="Liberation Sans" font-weight="bold" font-size="12.8" fill="#fff" text-anchor="middle">SVG</text><defs><linearGradient id="gprn" x1="0" y1="0" x2="0" y2="1"><stop offset="0" stop-color="#f6f6f6"/><stop offset="1" stop-color="#c8c8c8"/></linearGradient><linearGradient id="gund" x1="0" y1="0" x2="1" y2="1"><stop offset="0" stop-color="#8fd48a"/><stop offset="1" stop-color="#1f9a38"/></linearGradient></defs><ellipse cx="374" cy="58.3" rx="13" ry="1.5" fill="#999" opacity="0.35"/><rect x="365" y="32.2" width="18" height="14" rx="1" fill="#f0f0f0" stroke="#b8b8b8" stroke-width="0.8"/><rect x="367" y="35" width="13" height="8" fill="#dcdcdc"/><rect x="360.3" y="43.4" width="27.2" height="14" rx="2.5" fill="url(#gprn)" stroke="#9a9a9a" stroke-width="0.9"/><path d="M361 50.5 h26" stroke="#fff" stroke-width="0.8"/><path d="M374.3 46.2 L381.4 51.4" stroke="#777" stroke-width="3.6" stroke-linecap="round"/><path d="M374.3 46.2 L381.4 51.4" stroke="#cfcfcf" stroke-width="1.6" stroke-linecap="round"/><circle cx="369.5" cy="41" r="6.6" fill="#eaeaea" stroke="#cfcfcf" stroke-width="1"/><circle cx="369.5" cy="41" r="5.2" fill="url(#gmag)" stroke="#5b84c8" stroke-width="1"/><path d="M420.5 42.2 C427 35.5 436.5 36 439.3 44.5 C441 51 436 56.2 427.8 57.8 C437.5 57.8 443.3 52 442.9 44.3 C442.3 35 430 28.5 418.3 39.8 Z" fill="url(#gund)" stroke="#16802c" stroke-width="0.8"/><path d="M414.8 37.2 L414.8 51.6 L428.6 51.6 Z" fill="url(#gund)" stroke="#16802c" stroke-width="0.8" stroke-linejoin="round"/><g opacity="0.5" transform="translate(904,0) scale(-1,1)"><path d="M420.5 42.2 C427 35.5 436.5 36 439.3 44.5 C441 51 436 56.2 427.8 57.8 C437.5 57.8 443.3 52 442.9 44.3 C442.3 35 430 28.5 418.3 39.8 Z" fill="url(#gund)" stroke="#16802c" stroke-width="0.8"/><path d="M414.8 37.2 L414.8 51.6 L428.6 51.6 Z" fill="url(#gund)" stroke="#16802c" stroke-width="0.8" stroke-linejoin="round"/></g><ellipse cx="531" cy="57.2" rx="12" ry="1.3" fill="#d4d4d4" opacity="0.8"/><g transform="translate(531,45) rotate(-45)"><rect x="-13.5" y="-5.3" width="27" height="10.6" rx="0.8" fill="#e08a8a"/><rect x="-6.5" y="-1.6" width="19" height="3.2" fill="#f2f2f2"/><rect x="-6.5" y="-5.3" width="19" height="3.7" fill="#e89a9a"/><rect x="-13.5" y="-5.3" width="7" height="10.6" fill="#f0f0f0" stroke="#c8c8c8" stroke-width="0.5"/><rect x="12.5" y="-5.3" width="1.4" height="10.6" fill="#a0a0a0"/></g><path d="M585.6 46.5 L587.3 31.5 L590.3 31 L589.7 46.5Z" fill="#f4f4f4" stroke="#9a9a9a" stroke-width="0.7"/><path d="M589 43.5 L600.2 36.8 L601.2 39.8 L590.5 47Z" fill="#f4f4f4" stroke="#9a9a9a" stroke-width="0.7"/><ellipse cx="579.6" cy="48" rx="5" ry="3" transform="rotate(-22 579.6 48)" fill="none" stroke="#e07878" stroke-width="2.2"/><ellipse cx="589.6" cy="54.5" rx="3" ry="5" transform="rotate(-8 589.6 54.5)" fill="none" stroke="#e07878" stroke-width="2.2"/><path d="M584 47.5 L587.5 46.5" stroke="#e07878" stroke-width="2.2"/><path d="M573.2 57.3 h6.4 M576.4 54.1 v6.4" stroke="#333" stroke-width="1"/><rect x="618.5" y="30.5" width="21" height="24" rx="1.5" fill="#f2f2f2" stroke="#cfcfcf" stroke-width="0.8"/><path d="M621 37 h5" stroke="#dedede" stroke-width="0.9"/><path d="M621 40 h5" stroke="#dedede" stroke-width="0.9"/><path d="M621 43 h5" stroke="#dedede" stroke-width="0.9"/><path d="M621 46 h5" stroke="#dedede" stroke-width="0.9"/><path d="M627 36.5 h20.5 v19.5 l-5.5 5.5 h-15z" fill="#efefef" stroke="#bdbdbd" stroke-width="0.8"/><path d="M642 61.5 v-5.5 h5.5" fill="#d8d8d8" stroke="#bdbdbd" stroke-width="0.6"/><path d="M631 43.4 h13.5" stroke="#c6c6c6" stroke-width="0.9"/><path d="M631 46.0 h13.5" stroke="#c6c6c6" stroke-width="0.9"/><path d="M631 48.6 h13.5" stroke="#c6c6c6" stroke-width="0.9"/><path d="M631 51.2 h13.5" stroke="#c6c6c6" stroke-width="0.9"/><path d="M619 56.6 h6.5 M622.3 53.3 v6.6" stroke="#444" stroke-width="1"/><rect x="665.8" y="32.8" width="26.2" height="27.8" rx="1.2" fill="#c4851f" stroke="#9a6412" stroke-width="0.8"/><path d="M668.8 34.4 H689.2 V52.5 L683.5 58.4 H668.8Z" fill="#fafafa"/><path d="M683.5 58.4 V52.5 H689.2" fill="#cfcfcf" stroke="#999" stroke-width="0.5"/><path d="M673 30.8 h11.6 v3 h1.3 v3.5 h-14.2 v-3.5 h1.3z" fill="#9a9a90" stroke="#5a5a55" stroke-width="0.7"/><path d="M672.4 40.4 h13.5" stroke="#b8b8b8" stroke-width="0.9"/><path d="M672.4 43.1 h12" stroke="#b8b8b8" stroke-width="0.9"/><path d="M672.4 45.8 h13.5" stroke="#b8b8b8" stroke-width="0.9"/><path d="M672.4 48.5 h12" stroke="#b8b8b8" stroke-width="0.9"/><path d="M672.4 51.2 h13.5" stroke="#b8b8b8" stroke-width="0.9"/><g transform="translate(724,55) rotate(-42)"><path d="M0 0 L6 -2.6 H24 Q26.2 -2.6 26.2 0 Q26.2 2.6 24 2.6 H6Z" fill="#dc3a24" stroke="#7a3a10" stroke-width="0.9" stroke-linejoin="round"/><path d="M0 0 L6 -2.6 V2.6Z" fill="#f0d0a0" stroke="#7a3a10" stroke-width="0.6"/><path d="M0 0 L2 -0.9 V0.9Z" fill="#222"/><rect x="19" y="-2.6" width="2.6" height="5.2" fill="#d8d8d8"/><path d="M7 -1 H19" stroke="#f07a60" stroke-width="0.9"/></g><path d="M723.2 56.4 H744.7" stroke="#f00" stroke-width="1.5"/><rect x="766" y="35.8" width="28.3" height="21" rx="1" fill="#000082" stroke="#1a1a1a" stroke-width="1.4"/><path d="M769.3 53.8 L791 39 V53.8Z" fill="none" stroke="#e8e8ff" stroke-width="1.3" stroke-dasharray="2.6 1.4"/><circle cx="826" cy="45.6" r="13" fill="none" stroke="#000" stroke-width="2"/><path d="M812.3 59.5 L839.8 32" stroke="#0018ff" stroke-width="1.3"/><rect x="870.5" y="33" width="2" height="2" fill="#111"/><rect x="870.5" y="41" width="2" height="2" fill="#111"/><rect x="870.5" y="49" width="2" height="2" fill="#111"/><rect x="870.5" y="57" width="2" height="2" fill="#111"/><rect x="878.5" y="33" width="2" height="2" fill="#111"/><rect x="878.5" y="41" width="2" height="2" fill="#111"/><rect x="878.5" y="49" width="2" height="2" fill="#111"/><rect x="878.5" y="57" width="2" height="2" fill="#111"/><rect x="886.5" y="33" width="2" height="2" fill="#111"/><rect x="886.5" y="41" width="2" height="2" fill="#111"/><rect x="886.5" y="49" width="2" height="2" fill="#111"/><rect x="886.5" y="57" width="2" height="2" fill="#111"/><rect x="894.5" y="33" width="2" height="2" fill="#111"/><rect x="894.5" y="41" width="2" height="2" fill="#111"/><rect x="894.5" y="49" width="2" height="2" fill="#111"/><rect x="894.5" y="57" width="2" height="2" fill="#111"/><g opacity="1.0"><ellipse cx="940" cy="56" rx="10" ry="2.5" fill="#888" opacity="0.18"/><path d="M946.5 51.5 l7 7" stroke="#6a6a6a" stroke-width="4.6" stroke-linecap="round"/><path d="M946.5 51.5 l7 7" stroke="#9a9a9a" stroke-width="1.4" stroke-linecap="round" stroke-dasharray="1.2 1"/><circle cx="936" cy="42" r="11.0" fill="#ececec" stroke="#c4c4bc" stroke-width="1.2"/><circle cx="936" cy="42" r="9.0" fill="url(#gmag)"/><path d="M930 42 h12 M936 36 v12" stroke="#2f5fa8" stroke-width="4.4"/><path d="M930.5 42 h11 M936 36.5 v11" stroke="#fff" stroke-width="3"/></g><g opacity="1.0"><ellipse cx="986" cy="56" rx="10" ry="2.5" fill="#888" opacity="0.18"/><path d="M992.5 51.5 l7 7" stroke="#6a6a6a" stroke-width="4.6" stroke-linecap="round"/><path d="M992.5 51.5 l7 7" stroke="#9a9a9a" stroke-width="1.4" stroke-linecap="round" stroke-dasharray="1.2 1"/><circle cx="982" cy="42" r="11.0" fill="#ececec" stroke="#c4c4bc" stroke-width="1.2"/><circle cx="982" cy="42" r="9.0" fill="url(#gmag)"/><path d="M976 42 h12" stroke="#2f5fa8" stroke-width="4.4"/><path d="M976.5 42 h11" stroke="#fff" stroke-width="3"/></g><g opacity="1.0"><ellipse cx="1032" cy="56" rx="10" ry="2.5" fill="#888" opacity="0.18"/><path d="M1038.5 51.5 l7 7" stroke="#6a6a6a" stroke-width="4.6" stroke-linecap="round"/><path d="M1038.5 51.5 l7 7" stroke="#9a9a9a" stroke-width="1.4" stroke-linecap="round" stroke-dasharray="1.2 1"/><circle cx="1028" cy="42" r="11.0" fill="#ececec" stroke="#c4c4bc" stroke-width="1.2"/><circle cx="1028" cy="42" r="9.0" fill="url(#gmag)"/><rect x="1025.5" y="39.5" width="5" height="5" fill="#c4d8f2" opacity="0.6"/><path d="M1022.5 40.2 v-3.7 h3.7 M1029.8 36.5 h3.7 v3.7 M1033.5 43.8 v3.7 h-3.7 M1026.2 47.5 h-3.7 v-3.7" stroke="#2f5fa8" stroke-width="2.6" fill="none" opacity="0.6"/><path d="M1022.5 40.2 v-3.7 h3.7 M1029.8 36.5 h3.7 v3.7 M1033.5 43.8 v3.7 h-3.7 M1026.2 47.5 h-3.7 v-3.7" stroke="#fff" stroke-width="1.6" fill="none"/></g><g opacity="0.6"><ellipse cx="1078" cy="56" rx="10" ry="2.5" fill="#888" opacity="0.18"/><path d="M1084.5 51.5 l7 7" stroke="#6a6a6a" stroke-width="4.6" stroke-linecap="round"/><path d="M1084.5 51.5 l7 7" stroke="#9a9a9a" stroke-width="1.4" stroke-linecap="round" stroke-dasharray="1.2 1"/><circle cx="1074" cy="42" r="11.0" fill="#ececec" stroke="#c4c4bc" stroke-width="1.2"/><circle cx="1074" cy="42" r="9.0" fill="url(#gmag)"/><rect x="1071.5" y="39.5" width="5" height="5" fill="#c4d8f2" opacity="0.6"/><path d="M1068.5 40.2 v-3.7 h3.7 M1075.8 36.5 h3.7 v3.7 M1079.5 43.8 v3.7 h-3.7 M1072.2 47.5 h-3.7 v-3.7" stroke="#e88" stroke-width="2.6" fill="none" opacity="0.6"/><path d="M1068.5 40.2 v-3.7 h3.7 M1075.8 36.5 h3.7 v3.7 M1079.5 43.8 v3.7 h-3.7 M1072.2 47.5 h-3.7 v-3.7" stroke="#f05050" stroke-width="1.6" fill="none"/></g><g opacity="1.0"><ellipse cx="1124" cy="56" rx="10" ry="2.5" fill="#888" opacity="0.18"/><path d="M1130.5 51.5 l7 7" stroke="#6a6a6a" stroke-width="4.6" stroke-linecap="round"/><path d="M1130.5 51.5 l7 7" stroke="#9a9a9a" stroke-width="1.4" stroke-linecap="round" stroke-dasharray="1.2 1"/><circle cx="1120" cy="42" r="11.0" fill="#ececec" stroke="#c4c4bc" stroke-width="1.2"/><circle cx="1120" cy="42" r="9.0" fill="url(#gmag)"/><path d="M1113 42 L1118.5 37 V39.8 H1126.5 V44.2 H1118.5 V47Z" fill="#fff" stroke="#2f5fa8" stroke-width="0.9" stroke-linejoin="round"/></g><rect x="1154.5" y="31" width="27.3" height="17.2" rx="1" fill="#fff" stroke="#6f92d6" stroke-width="1.2"/><g opacity="1.0"><ellipse cx="1172" cy="57.6" rx="10" ry="2.5" fill="#888" opacity="0.18"/><path d="M1178.5 53.1 l7 7" stroke="#6a6a6a" stroke-width="4.6" stroke-linecap="round"/><path d="M1178.5 53.1 l7 7" stroke="#9a9a9a" stroke-width="1.4" stroke-linecap="round" stroke-dasharray="1.2 1"/><circle cx="1168" cy="43.6" r="9.9" fill="#ececec" stroke="#c4c4bc" stroke-width="1.2"/><circle cx="1168" cy="43.6" r="8.1" fill="url(#gmag)"/></g><g opacity="1.0"><ellipse cx="1217" cy="56" rx="10" ry="2.5" fill="#888" opacity="0.18"/><path d="M1223.5 51.5 l7 7" stroke="#6a6a6a" stroke-width="4.6" stroke-linecap="round"/><path d="M1223.5 51.5 l7 7" stroke="#9a9a9a" stroke-width="1.4" stroke-linecap="round" stroke-dasharray="1.2 1"/><circle cx="1213" cy="42" r="11.0" fill="#ececec" stroke="#c4c4bc" stroke-width="1.2"/><circle cx="1213" cy="42" r="9.0" fill="url(#gmag)"/></g><path transform="rotate(0 1213.3 42.9)" d="M1213.3 30.599999999999998 L1216.8 34.9 H1214.5 V41.9 H1212.1 V34.9 H1209.8Z" fill="#fff" stroke="#5a86cc" stroke-width="0.8" stroke-linejoin="round"/><path transform="rotate(90 1213.3 42.9)" d="M1213.3 30.599999999999998 L1216.8 34.9 H1214.5 V41.9 H1212.1 V34.9 H1209.8Z" fill="#fff" stroke="#5a86cc" stroke-width="0.8" stroke-linejoin="round"/><path transform="rotate(180 1213.3 42.9)" d="M1213.3 30.599999999999998 L1216.8 34.9 H1214.5 V41.9 H1212.1 V34.9 H1209.8Z" fill="#fff" stroke="#5a86cc" stroke-width="0.8" stroke-linejoin="round"/><path transform="rotate(270 1213.3 42.9)" d="M1213.3 30.599999999999998 L1216.8 34.9 H1214.5 V41.9 H1212.1 V34.9 H1209.8Z" fill="#fff" stroke="#5a86cc" stroke-width="0.8" stroke-linejoin="round"/><circle cx="102.3" cy="118.7" r="5.6" fill="#eef2f8" stroke="#2c4a9a" stroke-width="2"/><path d="M103 118 l5 5" stroke="#e8a020" stroke-width="2"/><path d="M98 117 l4 -2 M99 121 l3 -4" stroke="#d06060" stroke-width="0.6"/><rect x="1133.5" y="780.5" width="13" height="9" fill="#eee" stroke="#222" stroke-width="1"/><rect x="1133" y="780" width="14" height="2.5" fill="#111"/><g transform="translate(6.6,162.3) scale(1.0)"><path d="M0 4 Q0 0 4 0 H22.3 V18.9 H7.6 V14.7 H1.2 Q0 14.7 0 13.5Z" fill="none" stroke="#333" stroke-width="1.3" stroke-linejoin="round"/><circle cx="7.4" cy="7.9" r="3.3" fill="none" stroke="#333" stroke-width="1.3"/><path d="M10.9 14.2 L18.2 6.7 V14.2Z" fill="none" stroke="#333" stroke-width="1.3" stroke-linejoin="round"/></g><g transform="translate(42.1,162.3) scale(1.0)"><path d="M0 4 Q0 0 4 0 H22.3 V18.9 H7.6 V14.7 H1.2 Q0 14.7 0 13.5Z" fill="none" stroke="#f02828" stroke-width="1.3" stroke-linejoin="round"/><circle cx="7.4" cy="7.9" r="3.3" fill="none" stroke="#f02828" stroke-width="1.3"/><path d="M10.9 14.2 L18.2 6.7 V14.2Z" fill="none" stroke="#f02828" stroke-width="1.3" stroke-linejoin="round"/></g><rect x="6.6" y="196.4" width="23.2" height="23.6" fill="#fff" stroke="#555" stroke-width="1.6"/><g transform="translate(10.5,201.5) scale(0.7)"><path d="M0 4 Q0 0 4 0 H22.3 V18.9 H7.6 V14.7 H1.2 Q0 14.7 0 13.5Z" fill="none" stroke="#ff7070" stroke-width="1.6" stroke-linejoin="round"/><circle cx="7.4" cy="7.9" r="3.3" fill="none" stroke="#ff7070" stroke-width="1.6"/><path d="M10.9 14.2 L18.2 6.7 V14.2Z" fill="none" stroke="#ff7070" stroke-width="1.6" stroke-linejoin="round"/></g><path d="M42.1 200 Q42.1 197 45.3 197" fill="none" stroke="#333" stroke-width="1.5"/><path d="M45.3 197 H64.4 V216" fill="none" stroke="#f02828" stroke-width="1.5"/><path d="M42.1 200 V210.5 H49.7 V214.9 H64.4" fill="none" stroke="#333" stroke-width="1.5"/><circle cx="49.5" cy="205" r="3.3" fill="none" stroke="#333" stroke-width="1.5"/><path d="M46.5 205 A3.3 3.3 0 0 0 52 207.5" fill="none" stroke="#f02828" stroke-width="1.5"/><path d="M53 214.9 L60.3 203.5 V214.9" fill="none" stroke="#f02828" stroke-width="1.5"/><path d="M51 214.9 H60" stroke="#333" stroke-width="1.5"/><path d="M41.5 197.5 L65 217" stroke="#444" stroke-width="0.9"/><rect x="7.2" y="242" width="21.7" height="17.5" fill="#b8b8dc" stroke="#666" stroke-width="1.3"/><circle cx="14.5" cy="248.7" r="2.9" fill="none" stroke="#e81010" stroke-width="1.4"/><path d="M17.3 255.5 L24.6 250.4 V255.5Z" fill="none" stroke="#e81010" stroke-width="1.4"/><path d="M41.9 244.6 L49.1 241.3 L63.3 249 L61.8 259.5 L51.3 262 L43 255.7Z" fill="#b8b8dc" stroke="#666" stroke-width="1.2"/><circle cx="48" cy="248.7" r="3.3" fill="none" stroke="#e81010" stroke-width="1.4"/><path d="M53.5 257.6 L60.7 252.6 V257.6Z" fill="none" stroke="#e81010" stroke-width="1.4"/><circle cx="60.4" cy="243.2" r="2.4" fill="none" stroke="#555" stroke-width="1"/><g transform="translate(6.6,283.5) scale(1.0)"><path d="M0 4 Q0 0 4 0 H22.3 V18.9 H7.6 V14.7 H1.2 Q0 14.7 0 13.5Z" fill="none" stroke="#f02828" stroke-width="1.3" stroke-linejoin="round"/><circle cx="7.4" cy="7.9" r="3.3" fill="none" stroke="#333" stroke-width="1.3"/><path d="M10.9 14.2 L18.2 6.7 V14.2Z" fill="none" stroke="#333" stroke-width="1.3" stroke-linejoin="round"/></g><g transform="translate(42.1,283.5)"><path d="M22.3 0 V18.9 H7.6 V14.7" fill="none" stroke="#f02828" stroke-width="1.5"/><path d="M7.6 14.7 H1.2 Q0 14.7 0 13.5 V3.2 Q0 0 3.2 0 H22.3" fill="none" stroke="#333" stroke-width="1.5"/><circle cx="7.4" cy="7.9" r="3.3" fill="none" stroke="#333" stroke-width="1.5"/><path d="M10.9 14.2 L18.2 6.7 V14.2Z" fill="none" stroke="#f02828" stroke-width="1.5"/><path d="M15 -1 V22" stroke="#999" stroke-width="1.2"/></g><path d="M6.5 326.3 L23.1 316.9 V331 L6.5 340.3Z" fill="#777" stroke="#222" stroke-width="1.1"/><path d="M9.5 326.3 L26.1 317.2 V331.5 L9.5 340.5Z" fill="#bbb" stroke="#222" stroke-width="1.1"/><path d="M13 326.3 L29.6 317.6 V332.8 L13.7 340.7Z" fill="#fff" stroke="#222" stroke-width="1.1"/><path d="M17.3 335.7 L26 322 V331.3Z" fill="none" stroke="#e81010" stroke-width="1.3"/><circle cx="1164.1" cy="117.9" r="6.9" fill="#6e6e6e"/><path d="M1161.4 115.2 l5.4 5.4 M1166.8 115.2 l-5.4 5.4" stroke="#fff" stroke-width="1.7"/><circle cx="1182" cy="117.9" r="6.9" fill="#6e6e6e"/><rect x="1179.6" y="115" width="6.2" height="4.4" fill="none" stroke="#fff" stroke-width="1.2"/><rect x="1178.2" y="117.4" width="5.6" height="4.2" fill="#6e6e6e" stroke="#fff" stroke-width="1.2"/><g transform="translate(1185,143) scale(1.0)"><path d="M-7.6 0.2 Q-4 -5.6 0 -5.4 Q4 -5.6 7.6 0.2 Q4 5.6 0 5.4 Q-4 5.6 -7.6 0.2Z" fill="#000" stroke="#000" stroke-width="0.6"/><ellipse cx="0" cy="0.3" rx="4.6" ry="3.7" fill="#fff"/><circle cx="0" cy="-0.5" r="3.2" fill="#000"/><circle cx="-0.7" cy="-1.6" r="0.6" fill="#fff"/></g><g transform="translate(1245,143) scale(1.0)"><path d="M-7.6 0.2 Q-4 -5.6 0 -5.4 Q4 -5.6 7.6 0.2 Q4 5.6 0 5.4 Q-4 5.6 -7.6 0.2Z" fill="#b0b0b0" stroke="#b0b0b0" stroke-width="0.6"/><ellipse cx="0" cy="0.3" rx="4.6" ry="3.7" fill="#fff"/><circle cx="0" cy="-0.5" r="3.2" fill="#b0b0b0"/><circle cx="-0.7" cy="-1.6" r="0.6" fill="#fff"/></g><path d="M1298.8 143 h12.4 M1305 137.6 v10.8" stroke="#e00" stroke-width="3"/><path d="M1359 143 h12" stroke="#e00" stroke-width="3"/><g transform="translate(1418,136) scale(1)"><path d="M0 14 l1.5 -4 l11 -11 l2.5 2.5 l-11 11z" fill="#f0b030" stroke="#8a5a10" stroke-width="0.6"/><path d="M12.5 -1 l2.5 2.5 l1.2 -1.2 l-2.5 -2.5z" fill="#e02020"/></g><g transform="translate(1422.8,167) scale(1.0)"><path d="M-7.6 0.2 Q-4 -5.6 0 -5.4 Q4 -5.6 7.6 0.2 Q4 5.6 0 5.4 Q-4 5.6 -7.6 0.2Z" fill="#000" stroke="#000" stroke-width="0.6"/><ellipse cx="0" cy="0.3" rx="4.6" ry="3.7" fill="#fff"/><circle cx="0" cy="-0.5" r="3.2" fill="#000"/><circle cx="-0.7" cy="-1.6" r="0.6" fill="#fff"/></g><path d="M1441.3 166.5 v-2.3 a3.8 3.8 0 0 1 7.6 0 v2.3" fill="none" stroke="#c2c2c2" stroke-width="1.4"/><rect x="1440.2" y="166.4" width="9.8" height="7.1" rx="0.6" fill="#c2c2c2"/><g transform="translate(1422.8,187) scale(1.0)"><path d="M-7.6 0.2 Q-4 -5.6 0 -5.4 Q4 -5.6 7.6 0.2 Q4 5.6 0 5.4 Q-4 5.6 -7.6 0.2Z" fill="#000" stroke="#000" stroke-width="0.6"/><ellipse cx="0" cy="0.3" rx="4.6" ry="3.7" fill="#fff"/><circle cx="0" cy="-0.5" r="3.2" fill="#000"/><circle cx="-0.7" cy="-1.6" r="0.6" fill="#fff"/></g><path d="M1441.3 186.5 v-2.3 a3.8 3.8 0 0 1 7.6 0 v2.3" fill="none" stroke="#c2c2c2" stroke-width="1.4"/><rect x="1440.2" y="186.4" width="9.8" height="7.1" rx="0.6" fill="#c2c2c2"/><g transform="translate(1422.8,207) scale(1.0)"><path d="M-7.6 0.2 Q-4 -5.6 0 -5.4 Q4 -5.6 7.6 0.2 Q4 5.6 0 5.4 Q-4 5.6 -7.6 0.2Z" fill="#000" stroke="#000" stroke-width="0.6"/><ellipse cx="0" cy="0.3" rx="4.6" ry="3.7" fill="#fff"/><circle cx="0" cy="-0.5" r="3.2" fill="#000"/><circle cx="-0.7" cy="-1.6" r="0.6" fill="#fff"/></g><path d="M1441.3 206.5 v-2.3 a3.8 3.8 0 0 1 7.6 0 v2.3" fill="none" stroke="#c2c2c2" stroke-width="1.4"/><rect x="1440.2" y="206.4" width="9.8" height="7.1" rx="0.6" fill="#c2c2c2"/><g transform="translate(1422.8,227) scale(1.0)"><path d="M-7.6 0.2 Q-4 -5.6 0 -5.4 Q4 -5.6 7.6 0.2 Q4 5.6 0 5.4 Q-4 5.6 -7.6 0.2Z" fill="#000" stroke="#000" stroke-width="0.6"/><ellipse cx="0" cy="0.3" rx="4.6" ry="3.7" fill="#fff"/><circle cx="0" cy="-0.5" r="3.2" fill="#000"/><circle cx="-0.7" cy="-1.6" r="0.6" fill="#fff"/></g><path d="M1441.3 226.5 v-2.3 a3.8 3.8 0 0 1 7.6 0 v2.3" fill="none" stroke="#c2c2c2" stroke-width="1.4"/><rect x="1440.2" y="226.4" width="9.8" height="7.1" rx="0.6" fill="#c2c2c2"/><g transform="translate(1394.5,200.5) scale(0.88)"><path d="M0 14 l1.5 -4 l11 -11 l2.5 2.5 l-11 11z" fill="#f0b030" stroke="#8a5a10" stroke-width="0.6"/><path d="M12.5 -1 l2.5 2.5 l1.2 -1.2 l-2.5 -2.5z" fill="#e02020"/></g><rect x="1463.5" y="127.5" width="27" height="27" fill="#fff" stroke="#222" stroke-width="1"/><rect x="1463" y="127" width="28" height="4" fill="#000"/><rect x="1464.5" y="127.8" width="2.4" height="2.4" fill="#fff"/><path d="M1470 145 l6-3 v8 l-6 3z M1473 144 l8-4 v9 l-8 4z" fill="#ccc" stroke="#444" stroke-width="0.8"/><path d="M1477 149 l5 -7 v6z" fill="none" stroke="#e00" stroke-width="0.8"/><rect x="1463.5" y="174.5" width="27" height="27" fill="#fff" stroke="#222" stroke-width="1"/><rect x="1463" y="174" width="28" height="4" fill="#000"/><rect x="1464.5" y="174.8" width="2.4" height="2.4" fill="#fff"/><rect x="1468.5" y="180.5" width="9.5" height="7.5" fill="#f8f0c8" stroke="#555" stroke-width="0.8"/><circle cx="1478.5" cy="190" r="4.5" fill="#f8f0c8" fill-opacity="0.8" stroke="#555" stroke-width="0.8"/><rect x="1463.5" y="220.5" width="27" height="27" fill="#fff" stroke="#222" stroke-width="1"/><rect x="1463" y="220" width="28" height="4" fill="#000"/><rect x="1464.5" y="220.8" width="2.4" height="2.4" fill="#fff"/><rect x="1469" y="228" width="16" height="11" rx="2" fill="#f4f4f4" stroke="#b8c8e8" stroke-width="1"/><rect x="1463.5" y="276.5" width="27" height="27" fill="#fff" stroke="#222" stroke-width="1"/><rect x="1463" y="276" width="28" height="4" fill="#000"/><rect x="1464.5" y="276.8" width="2.4" height="2.4" fill="#fff"/><rect x="1467" y="283" width="4" height="3" fill="#000"/><rect x="1474.5" y="283.5" width="12" height="3" fill="#fff" stroke="#333" stroke-width="0.8"/><rect x="1467" y="289" width="4" height="3" fill="#000"/><rect x="1474.5" y="289.5" width="12" height="3" fill="#fff" stroke="#333" stroke-width="0.8"/><rect x="1467" y="295" width="4" height="3" fill="#000"/><rect x="1474.5" y="295.5" width="12" height="3" fill="#fff" stroke="#333" stroke-width="0.8"/><rect x="1463.5" y="322.5" width="27" height="27" fill="#fff" stroke="#222" stroke-width="1"/><rect x="1463" y="322" width="28" height="4" fill="#000"/><rect x="1464.5" y="322.8" width="2.4" height="2.4" fill="#fff"/><path d="M1469 331 h16 l-6 7 v7 l-4 2 v-9z" fill="#ddd" stroke="#555" stroke-width="0.8"/><rect x="1463.5" y="368.5" width="27" height="27" fill="#fff" stroke="#222" stroke-width="1"/><rect x="1463" y="368" width="28" height="4" fill="#000"/><rect x="1464.5" y="368.8" width="2.4" height="2.4" fill="#fff"/><rect x="1468" y="377" width="10" height="12" fill="#eee" stroke="#555" stroke-width="0.8"/><rect x="1478" y="379" width="8" height="8" fill="#999" stroke="#555" stroke-width="0.6"/><path d="M1465 383 h24" stroke="#f08080" stroke-width="0.6"/><rect x="1463.5" y="425.5" width="27" height="27" fill="#fff" stroke="#222" stroke-width="1"/><rect x="1463" y="425" width="28" height="4" fill="#000"/><rect x="1464.5" y="425.8" width="2.4" height="2.4" fill="#fff"/><path d="M1467 434 h14 M1467 438 h12 M1467 442 h14 M1467 446 h13" stroke="#555" stroke-width="0.8"/><path d="M1467 450 h20" stroke="#333" stroke-width="0.8"/><rect x="1463.5" y="471.5" width="27" height="27" fill="#fff" stroke="#222" stroke-width="1"/><rect x="1463" y="471" width="28" height="4" fill="#000"/><rect x="1464.5" y="471.8" width="2.4" height="2.4" fill="#fff"/><rect x="1471" y="479" width="12" height="16" fill="#d49a3a" stroke="#8a5a10" stroke-width="0.8"/><rect x="1473" y="482" width="8" height="11" fill="#f6f6f6"/><rect x="717.5" y="806.5" width="17" height="29" rx="8.5" fill="#fff" stroke="#333" stroke-width="1"/><path d="M717.5 819 Q726 817 734.5 819" fill="none" stroke="#333" stroke-width="1"/><rect x="724.5" y="808.5" width="3" height="7" rx="1.5" fill="none" stroke="#333" stroke-width="0.8"/></svg>
<svg class="a" style="left:0;top:0" width="1500" height="844" viewBox="0 0 1500 844"><defs><radialGradient id="ghl"><stop offset="0" stop-color="#dfe6ee" stop-opacity="0.10"/><stop offset="0.7" stop-color="#c8d4e0" stop-opacity="0.22"/><stop offset="0.8" stop-color="#9eb2c6" stop-opacity="0.55"/><stop offset="0.92" stop-color="#8298ae" stop-opacity="0.6"/><stop offset="1" stop-color="#8298ae" stop-opacity="0"/></radialGradient><clipPath id="hlc"><circle cx="61.2" cy="300.7" r="38"/></clipPath></defs><g clip-path="url(#hlc)"><rect x="36.5" y="277.5" width="34" height="34" fill="#ff5050" fill-opacity="0.28"/><path d="M29.6 277.5 H72 M27.4 311.5 H80 M36.5 269 V317 M70.5 277 V311" stroke="#e03030" stroke-opacity="0.75" stroke-width="1.2"/></g><circle cx="61.2" cy="300.7" r="35" fill="none" stroke="#a9bccd" stroke-opacity="0.22" stroke-width="8"/><circle cx="61.2" cy="300.7" r="32.3" fill="none" stroke="#8aa2b8" stroke-opacity="0.35" stroke-width="1.3"/><circle cx="61.2" cy="300.7" r="34.6" fill="none" stroke="#8aa2b8" stroke-opacity="0.45" stroke-width="1.3"/><circle cx="61.2" cy="300.7" r="36.9" fill="none" stroke="#8aa2b8" stroke-opacity="0.5" stroke-width="1.3"/><circle cx="61.2" cy="300.7" r="38.8" fill="none" stroke="#8aa2b8" stroke-opacity="0.45" stroke-width="1.3"/><path transform="translate(61.2,302.3)" d="M0 0 V22 L5.2 17.4 L9 26.2 L12.9 24.5 L9.1 15.7 H15.6 Z" fill="#fff" stroke="#000" stroke-width="1.5" stroke-linejoin="round"/></svg>
<div class="a" style="left:48px;top:329px;width:233px;height:24px;border-radius:3px;background:linear-gradient(#f3f5f8,#dfe5ec);border:1px solid #c8ccd2;box-shadow:0 1px 3px rgba(0,0,0,0.35)"></div>
<div class="t" style="left:52.6px;top:335px;font-size:14px;color:#111">Sélectionner les entités intersectées</div></body></html>
